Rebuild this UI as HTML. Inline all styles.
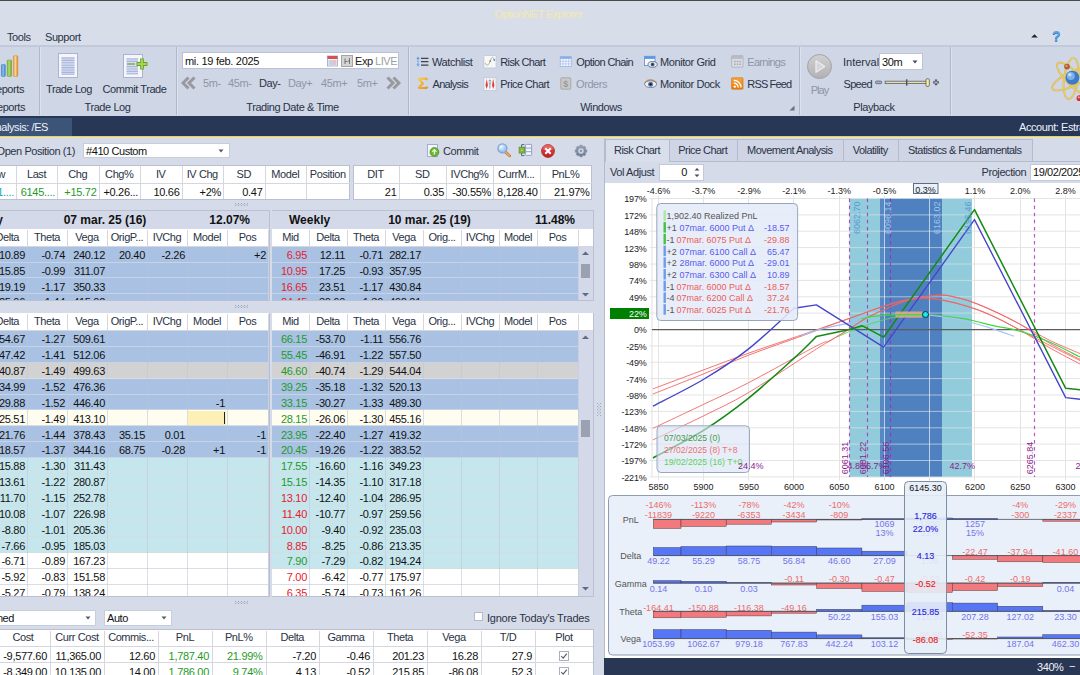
<!DOCTYPE html>
<html lang="en"><head><meta charset="utf-8"><title>OptionNET Explorer</title>
<style>
*{box-sizing:border-box;margin:0;padding:0}
html,body{width:1080px;height:675px;overflow:hidden;background:#d6dbe9}
body{position:relative;font-family:"Liberation Sans",sans-serif;font-size:11px;color:#2a3345;line-height:16px}
div,svg{position:absolute}
.t{white-space:nowrap;height:16px;line-height:16px;letter-spacing:-.42px}
.n{letter-spacing:-.3px}
.c{text-align:center}
.r{text-align:right}
.g{color:#8d96a6}
.b{font-weight:bold}
.grn{color:#1f9a2a}
.red{color:#e8202c}
</style></head>
<body>
<!-- ===== title bar / menu / ribbon ===== -->
<div style="left:0px;top:0px;width:1080px;height:46px;background:#d8ddea"></div><div style="left:0px;top:0px;width:1080px;height:1px;background:#4a4a4a"></div><div class="t c" style="left:438.5px;top:5.7px;width:200px;color:#f3e9b0;letter-spacing:-.58px">OptionNET Explorer</div><div class="t" style="left:7px;top:29px;">Tools</div><div class="t" style="left:45px;top:29px;">Support</div><svg style="left:1029px;top:31px" width="12" height="10" viewBox="0 0 12 10"><path d="M2.200 6.600 L5.500 3.200 L8.800 6.600 Z" fill="#1e2433"/></svg><div class="t" style="left:1052px;top:28px;font-size:14px;font-weight:bold;color:#5ba2e4;text-shadow:0 .5px 0 #3a7cc4">?</div><div style="left:0px;top:46px;width:1080px;height:70px;background:#cfd6e6"></div><div style="left:0px;top:45px;width:1080px;height:2px;background:#c2c9da"></div><div style="left:38.6px;top:47px;width:1px;height:68px;background:#b0b8ca"></div><div style="left:39.6px;top:47px;width:1px;height:68px;background:#dce1ed"></div><div style="left:175.5px;top:47px;width:1px;height:68px;background:#b0b8ca"></div><div style="left:176.5px;top:47px;width:1px;height:68px;background:#dce1ed"></div><div style="left:408.2px;top:47px;width:1px;height:68px;background:#b0b8ca"></div><div style="left:409.2px;top:47px;width:1px;height:68px;background:#dce1ed"></div><div style="left:799px;top:47px;width:1px;height:68px;background:#b0b8ca"></div><div style="left:800px;top:47px;width:1px;height:68px;background:#dce1ed"></div><div style="left:950.2px;top:47px;width:1px;height:68px;background:#b0b8ca"></div><div style="left:951.2px;top:47px;width:1px;height:68px;background:#dce1ed"></div><svg style="left:0;top:52px" width="24" height="28" viewBox="0 0 24 28"><defs><linearGradient id="b1" x1="0" y1="0" x2="1" y2="0"><stop offset="0" stop-color="#4a8cd4"/><stop offset=".45" stop-color="#8cc0f0"/><stop offset="1" stop-color="#3f7ec8"/></linearGradient><linearGradient id="b2" x1="0" y1="0" x2="1" y2="0"><stop offset="0" stop-color="#78b038"/><stop offset=".45" stop-color="#b4dc78"/><stop offset="1" stop-color="#6a9e30"/></linearGradient><linearGradient id="b3" x1="0" y1="0" x2="1" y2="0"><stop offset="0" stop-color="#ec9838"/><stop offset=".45" stop-color="#fcd498"/><stop offset="1" stop-color="#dc8428"/></linearGradient></defs><rect x="1.400" y="12.500" width="3.900" height="12" rx=".8" fill="url(#b1)" stroke="#3a78c0" stroke-width=".5"/><rect x="7.200" y="8" width="4.300" height="16.500" rx=".8" fill="url(#b2)" stroke="#6a9e30" stroke-width=".5"/><rect x="13.400" y="3.700" width="4.400" height="20.800" rx=".8" fill="url(#b3)" stroke="#d08a30" stroke-width=".5"/></svg><div class="t r" style="left:-176px;top:81px;width:200px;">Reports</div><div class="t r" style="left:-175px;top:99px;width:200px;">Reports</div><svg style="left:57px;top:52px" width="24" height="28" viewBox="0 0 24 28"><rect x="1.5" y="1.5" width="19" height="24" fill="#f4f6fb" stroke="#aab4cc"/><rect x="4.500" y="5" width="13" height="17.500" fill="#d4daf0"/><g stroke="#aab6dc" stroke-width="1.100"><path d="M4.500 6h13M4.500 8.400h13M4.500 10.800h13M4.500 13.200h13M4.500 15.600h13M4.500 18h13M4.500 20.400h13M4.500 22.300h13"/></g></svg><div class="t c" style="left:-31px;top:81px;width:200px;">Trade Log</div><svg style="left:122px;top:52px" width="28" height="28" viewBox="0 0 28 28"><rect x="1.5" y="2.5" width="19" height="23" fill="#f4f6fb" stroke="#aab4cc"/><rect x="4.500" y="6" width="11.500" height="16.500" fill="#d8def2"/><g stroke="#aab6dc" stroke-width="1.100"><path d="M4.500 7h11.500M4.500 9.400h11.500M4.500 14.600h11.500M4.500 17h11.500M4.500 19.400h11.500M4.500 21.800h11.500"/></g><path d="M5 12h8" stroke="#7fb15a" stroke-width="1.600"/><path d="M20 6.500v11M14.500 12h11" stroke="#6aa32a" stroke-width="3.800" stroke-linecap="butt"/><path d="M20 7.300v9.400M15.300 12h9.400" stroke="#a4d450" stroke-width="2.200" stroke-linecap="butt"/></svg><div class="t c" style="left:34.5px;top:81px;width:200px;">Commit Trade</div><div class="t c" style="left:7.5px;top:99px;width:200px;">Trade Log</div><div style="left:182px;top:52.4px;width:216.5px;height:17px;background:#fff;border:1px solid #b9c2d4"></div><div class="t n" style="left:185px;top:53px;color:#111">mi. 19 feb. 2025</div><svg style="left:326.500px;top:55px" width="27" height="12" viewBox="0 0 27 12"><rect x=".5" y="1" width="10" height="10" fill="#f4f6fc" stroke="#9aa6c8" stroke-width=".8"/><rect x=".5" y="1" width="10" height="3" fill="#d85050"/><rect x="1.500" y="5" width="4.500" height="5" fill="#c4d0ec"/><rect x="6" y="5" width="3.500" height="5" fill="#ecc0c0"/><rect x="14.500" y=".5" width="11" height="11" fill="#d4d4d4" stroke="#a4a4a4"/><path d="M18 3.500v5.500M22.500 3v6M18 6.500h2.500M21 6h1.500" stroke="#6a6a6a" stroke-width=".9"/></svg><div class="t" style="left:355px;top:53px;color:#222">Exp</div><div class="t" style="left:375px;top:53px;color:#9aa0aa">LIVE</div><svg style="left:181px;top:76px" width="16" height="14" viewBox="0 0 16 14"><path d="M7.5 1.5 L2 7 L7.5 12.5 M13.5 1.5 L8 7 L13.5 12.5" fill="none" stroke="#97999e" stroke-width="3"/></svg><div class="t g" style="left:203px;top:75px;">5m-</div><div class="t g" style="left:228px;top:75px;">45m-</div><div class="t" style="left:259px;top:75px;">Day-</div><div class="t g" style="left:288px;top:75px;">Day+</div><div class="t g" style="left:321px;top:75px;">45m+</div><div class="t g" style="left:357px;top:75px;">5m+</div><svg style="left:385px;top:76px" width="16" height="14" viewBox="0 0 16 14"><path d="M2.5 1.5 L8 7 L2.5 12.5 M8.5 1.5 L14 7 L8.5 12.5" fill="none" stroke="#97999e" stroke-width="3"/></svg><div class="t c" style="left:192.5px;top:99px;width:200px;">Trading Date &amp; Time</div><svg style="left:415px;top:55px" width="15" height="14" viewBox="0 0 15 14"><path d="M6 3.400h7.400M6 6.700h7.400M6 10.100h7.400" stroke="#3f434c" stroke-width="1.300"/><path d="M1.300 4 L3 1.600 L4.700 4ZM1.300 9.200 L3 11.600 L4.700 9.200Z" fill="#5a9ee8"/><path d="M3 4.200v4.800" stroke="#6aa8ec" stroke-width="1.600" stroke-dasharray="1.200 .8"/></svg><div class="t" style="left:432px;top:54px;">Watchlist</div><svg style="left:415px;top:76px" width="15" height="15" viewBox="0 0 15 15"><defs><linearGradient id="sg" x1="0" y1="0" x2="1" y2="1"><stop offset="0" stop-color="#f8cc58"/><stop offset="1" stop-color="#e8941a"/></linearGradient></defs><path d="M11.700 4.300V2.700H3.400L7.900 7.400L3.400 12H11.700V10.400" fill="none" stroke="url(#sg)" stroke-width="2.200" stroke-linejoin="bevel"/></svg><div class="t" style="left:432.5px;top:76px;letter-spacing:-.68px">Analysis</div><svg style="left:483px;top:55px" width="14" height="14" viewBox="0 0 14 14"><rect x=".9" y=".4" width="12.200" height="12.600" fill="#f5f7fb" stroke="#c2c9da" stroke-width=".9"/><path d="M2 8 Q3.200 10.600 4.800 10 C6 9.400 6.600 7.500 7.200 6.100 C8 4.200 8.600 2.400 9.600 2.400 C10.400 2.400 10.800 3.800 11.300 5" fill="none" stroke="#9cc07c" stroke-width="1"/><circle cx="7.200" cy="6.100" r=".9" fill="#e25a34"/><circle cx="11.300" cy="5" r=".9" fill="#5a8ad8"/></svg><div class="t" style="left:500.3px;top:54px;letter-spacing:-.64px">Risk Chart</div><svg style="left:483px;top:77px" width="14" height="14" viewBox="0 0 14 14"><rect x=".9" y=".8" width="12.200" height="12.600" fill="#f5f7fb" stroke="#c2c9da" stroke-width=".9"/><path d="M3.700 1.900 L4.300 5 L4.900 8.300 L3.700 11.900 L2.500 8.300 L3.100 5Z M10.200 1.900 L10.800 5 L11.400 8.300 L10.200 11.900 L9 8.300 L9.600 5Z" fill="#e23a36"/><path d="M3.700 1.900 L4.300 5 L3.100 5Z M10.200 1.900 L10.800 5 L9.600 5Z" fill="#f08a80"/><path d="M6.900 2.600v9" stroke="#8a8e98" stroke-width="1"/><rect x="6.100" y="3.300" width="1.700" height="3.200" fill="#fff" stroke="#8a8e98" stroke-width=".6"/></svg><div class="t" style="left:500.3px;top:76px;letter-spacing:-.57px">Price Chart</div><svg style="left:559px;top:55px" width="14" height="13" viewBox="0 0 14 13"><rect x="1.300" y="1.500" width="11" height="10" fill="#fdfdff" stroke="#a4b8e4" stroke-width=".9"/><rect x="1.300" y="1.500" width="11" height="2.400" fill="#86b0ec"/><path d="M1.300 6.300h11M1.300 8.900h11M4.100 3.900v7.600M6.900 3.900v7.600M9.700 3.900v7.600" stroke="#b4c6ec" stroke-width=".9"/></svg><div class="t" style="left:576.3px;top:54px;letter-spacing:-.62px">Option Chain</div><svg style="left:560px;top:77px" width="12" height="13" viewBox="0 0 12 13"><rect x=".8" y=".8" width="10" height="11.400" rx="1" fill="#c8c8c8" stroke="#a6a6a6" stroke-width=".9"/></svg><div class="t" style="left:563.3px;top:75.7px;font-size:9px;font-weight:bold;color:#9a9a9a;letter-spacing:0">$</div><div class="t g" style="left:576px;top:76px;">Orders</div><svg style="left:643px;top:55px" width="16" height="14" viewBox="0 0 16 14"><rect x="1.500" y="1.300" width="10.500" height="9.300" fill="#f6f9fe" stroke="#6a94d8" stroke-width=".9"/><rect x="1.500" y="1.300" width="10.500" height="2.600" fill="#5a98e8"/><ellipse cx="9.600" cy="9.400" rx="4.600" ry="2.900" fill="#e4e8f2" stroke="#5a6274" stroke-width=".8"/><circle cx="9.600" cy="9.400" r="1.900" fill="#4a6aa0"/><circle cx="9.600" cy="9.400" r=".9" fill="#1c2230"/></svg><div class="t" style="left:660px;top:54px;">Monitor Grid</div><svg style="left:643px;top:78px" width="16" height="12" viewBox="0 0 16 12"><path d="M1.600 4.600 Q7.500 -1 13.600 4.600" fill="none" stroke="#c89a6a" stroke-width="1.300"/><ellipse cx="7.600" cy="6.200" rx="6" ry="3.400" fill="#eef0f6" stroke="#6a7080" stroke-width=".8"/><circle cx="7.600" cy="6.200" r="2.500" fill="#5a7cb4"/><circle cx="7.600" cy="6.200" r="1.200" fill="#1c2230"/></svg><div class="t" style="left:660px;top:76px;">Monitor Dock</div><svg style="left:731px;top:55px" width="14" height="14" viewBox="0 0 14 14"><rect x=".6" y=".6" width="11.400" height="11.600" rx=".8" fill="#dadce2" stroke="#aaaeb8" stroke-width=".8"/><rect x="1" y="1" width="10.600" height="2.800" fill="#b6bac4"/><path d="M3 6.500h7M3 9.300h7" stroke="#a8acb8" stroke-width="1.500" stroke-dasharray="1.700 1"/></svg><div class="t g" style="left:747.3px;top:54px;letter-spacing:-.72px">Earnings</div><svg style="left:731px;top:77px" width="14" height="14" viewBox="0 0 14 14"><defs><linearGradient id="rg" x1="0" y1="0" x2="0" y2="1"><stop offset="0" stop-color="#f9a636"/><stop offset="1" stop-color="#e8780e"/></linearGradient></defs><rect x=".6" y=".8" width="11.400" height="11.400" rx=".8" fill="url(#rg)" stroke="#d87810" stroke-width=".7"/><circle cx="3.8" cy="9.6" r="1.2" fill="#fff"/><path d="M2.8 6.2a4.2 4.2 0 0 1 4.4 4.4M2.8 3.4a7 7 0 0 1 7.2 7.2" fill="none" stroke="#fff" stroke-width="1.3"/></svg><div class="t" style="left:747.3px;top:76px;letter-spacing:-.85px">RSS Feed</div><div class="t c" style="left:501px;top:99px;width:200px;">Windows</div><svg style="left:788px;top:104px" width="8" height="8" viewBox="0 0 8 8"><path d="M6.5 1.5v5h-5z" fill="#6a7080"/></svg><svg style="left:805.800px;top:53px" width="27" height="27" viewBox="0 0 27 27"><defs><linearGradient id="pg" x1="0" y1="0" x2="0" y2="1"><stop offset="0" stop-color="#d0d0d2"/><stop offset="1" stop-color="#b2b2b4"/></linearGradient></defs><circle cx="13.5" cy="13.5" r="12" fill="url(#pg)" stroke="#a4a4a8" stroke-width="1"/><path d="M10 7.800 L18.800 13.500 L10 19.200Z" fill="#d6d6d8" stroke="#ececee" stroke-width="1.300" stroke-linejoin="round"/></svg><div class="t g c" style="left:719.5px;top:81.7px;width:200px;letter-spacing:-.95px">Play</div><div class="t" style="left:843px;top:54px;letter-spacing:0">Interval</div><div style="left:879px;top:53.3px;width:44px;height:16.4px;background:#fff;border:1px solid #bcc4d6"></div><div class="t" style="left:882px;top:54px;color:#111">30m</div><svg style="left:911px;top:59px" width="8" height="6" viewBox="0 0 8 6"><path d="M1.5 1.5h5L4 4.5z" fill="#444a58"/></svg><div class="t" style="left:843.5px;top:76px;letter-spacing:-.7px">Speed</div><svg style="left:874px;top:77px" width="68" height="12" viewBox="0 0 68 12"><rect x="1.500" y="4.100" width="6.200" height="2.600" rx="1" fill="#aab0c0" stroke="#5a6072" stroke-width=".8"/><rect x="11.200" y="4.200" width="42.500" height="2.400" fill="#e6e0a4" stroke="#5a6072" stroke-width=".8"/><path d="M32.700 2.300v6.400" stroke="#4c5468" stroke-width="1.500"/><rect x="52" y="1.800" width="3.300" height="7.600" rx="1" fill="#f6f0aa" stroke="#5a5c50" stroke-width=".8"/><path d="M59.200 5.400h5.600M62 2.600v5.600" stroke="#454c5e" stroke-width="2.200"/><path d="M60.200 5.400h3.600M62 3.600v3.600" stroke="#c4cad8" stroke-width=".8"/></svg><div class="t c" style="left:774px;top:99px;width:200px;">Playback</div><svg style="left:1044px;top:50px" width="36" height="56" viewBox="1044 50 36 56"><g fill="none" stroke="#c99a1c" stroke-width="1.900" stroke-opacity=".55"><ellipse cx="1073" cy="78.500" rx="21.500" ry="7" transform="rotate(45 1073 78.500)"/><ellipse cx="1073" cy="78.500" rx="23" ry="7" transform="rotate(-26 1073 78.500)"/><ellipse cx="1071" cy="78.600" rx="7" ry="20.600" transform="rotate(7.500 1071 78.600)"/></g><g fill="none" stroke="#f0cf58" stroke-width="1.100"><ellipse cx="1073" cy="78.500" rx="21.500" ry="7" transform="rotate(45 1073 78.500)"/><ellipse cx="1073" cy="78.500" rx="23" ry="7" transform="rotate(-26 1073 78.500)"/><ellipse cx="1071" cy="78.600" rx="7" ry="20.600" transform="rotate(7.500 1071 78.600)"/></g><circle cx="1072.400" cy="77.800" r="7" fill="#3f7cc8"/><circle cx="1070.800" cy="76" r="4" fill="#7fb0ea"/><circle cx="1069.800" cy="74.800" r="1.800" fill="#c4dcf8"/><circle cx="1067" cy="66.600" r="2.900" fill="#b0602a"/><circle cx="1066.400" cy="65.900" r="1.200" fill="#dc9a6a"/><circle cx="1079.500" cy="98.200" r="2.900" fill="#d82a2a"/><circle cx="1078.800" cy="97.400" r="1.100" fill="#f4a0a0"/></svg><div style="left:0px;top:115.5px;width:1080px;height:21.5px;background:#293756"></div><div style="left:0px;top:118px;width:72px;height:19px;background:#3b5478"></div><div class="t r" style="left:-152px;top:119px;width:200px;color:#eef2fa">Analysis: /ES</div><div class="t" style="left:1019px;top:119px;color:#eef2fa">Account: Estrategia</div><div style="left:0px;top:136px;width:1080px;height:1px;background:#dccf74"></div><div style="left:0px;top:137px;width:1080px;height:1px;background:#e8e2b4"></div>
<!-- ===== left panel ===== -->
<div style="left:0px;top:138px;width:604px;height:537px;background:#d6dbe9"></div><div class="t r" style="left:-125px;top:142.5px;width:200px;">Open Position (1)</div><div style="left:83px;top:142.7px;width:147px;height:15.6px;background:#fff;border:1px solid #c6cddc"></div><div class="t" style="left:86px;top:142.5px;color:#111">#410 Custom</div><svg style="left:217px;top:148px" width="8" height="6" viewBox="0 0 8 6"><path d="M1.5 1.5h5L4 4.5z" fill="#555b68"/></svg><svg style="left:426px;top:143px" width="16" height="16" viewBox="0 0 16 16"><rect x="1.5" y="1.5" width="10" height="12" fill="#f4f6fb" stroke="#a4aec4"/><circle cx="8.400" cy="9" r="4.400" fill="#6ab834" stroke="#4a8c20" stroke-width=".8"/><path d="M8.400 11.600V7M6.300 8.800L8.400 6.600L10.500 8.800" fill="none" stroke="#e8f6d8" stroke-width="1.300"/></svg><div class="t" style="left:443px;top:142.5px;">Commit</div><svg style="left:495px;top:142px" width="18" height="18" viewBox="0 0 18 18"><defs><radialGradient id="mg" cx=".35" cy=".3" r=".8"><stop offset="0" stop-color="#f4faff"/><stop offset=".55" stop-color="#a8d0f8"/><stop offset="1" stop-color="#7fb4ec"/></radialGradient></defs><path d="M10.800 10.400L14.600 13.800" stroke="#b87a34" stroke-width="2.800" stroke-linecap="round"/><path d="M10.800 10.300L14.500 13.600" stroke="#eaa860" stroke-width="1.600" stroke-linecap="round"/><circle cx="7.400" cy="6.400" r="4.500" fill="url(#mg)" stroke="#86a2d2" stroke-width="1.300"/></svg><svg style="left:517px;top:142px" width="16" height="16" viewBox="0 0 16 16"><path d="M7.400 2.600H4.600V13.600H7.400" fill="none" stroke="#5a6484" stroke-width="1"/><rect x="8.600" y="2.400" width="6" height="11" rx=".6" fill="#f2f5fc" stroke="#8a9ac8" stroke-width=".9"/><path d="M8.600 6.100h6M8.600 9.700h6" stroke="#8a9ac8" stroke-width=".9"/><rect x="2.200" y="5.200" width="5.400" height="5.800" fill="#8cc63f" stroke="#5c9222" stroke-width=".9"/><rect x="3.900" y="7" width="2" height="2.200" fill="#c4e690" stroke="#5c9222" stroke-width=".5"/></svg><svg style="left:540px;top:142.500px" width="16" height="16" viewBox="0 0 16 16"><defs><linearGradient id="xg" x1="0" y1="0" x2="0" y2="1"><stop offset="0" stop-color="#ea5454"/><stop offset="1" stop-color="#b81c1c"/></linearGradient></defs><circle cx="8" cy="8" r="6.500" fill="url(#xg)" stroke="#b42424" stroke-width=".7"/><ellipse cx="8" cy="5" rx="4.800" ry="2.800" fill="#f08080" fill-opacity=".5"/><path d="M5.3 5.3l5.4 5.4M10.7 5.3l-5.4 5.400" stroke="#fff" stroke-width="2"/></svg><svg style="left:573px;top:142.800px" width="16" height="16" viewBox="0 0 16 16"><defs><linearGradient id="gg" x1="0" y1="0" x2="0" y2="1"><stop offset="0" stop-color="#95a0b8"/><stop offset="1" stop-color="#6a7792"/></linearGradient></defs><path d="M12.26 6.54 L13.77 6.77 L13.77 9.23 L12.26 9.46 L12.04 9.98 L12.95 11.21 L11.21 12.95 L9.98 12.04 L9.46 12.26 L9.23 13.77 L6.77 13.77 L6.54 12.26 L6.02 12.04 L4.79 12.95 L3.05 11.21 L3.96 9.98 L3.74 9.46 L2.23 9.23 L2.23 6.77 L3.74 6.54 L3.96 6.02 L3.05 4.79 L4.79 3.05 L6.02 3.96 L6.54 3.74 L6.77 2.23 L9.23 2.23 L9.46 3.74 L9.98 3.96 L11.21 3.05 L12.95 4.79 L12.04 6.02Z" fill="url(#gg)" stroke="#7a869e" stroke-width=".5" stroke-linejoin="round"/><circle cx="8" cy="8" r="2.700" fill="#d2d8e6" stroke="#b4bcd0" stroke-width=".6"/><circle cx="8" cy="8" r="1.150" fill="#8792aa"/></svg><div style="left:-25px;top:165px;width:374.5px;height:35px;background:#fff;border:1px solid #b9c0d0;border-left:0"></div><div style="left:-25px;top:183px;width:374.5px;height:1px;background:#d6d6e0"></div><div style="left:16px;top:166px;width:1px;height:33px;background:#d6d6e0"></div><div style="left:57px;top:166px;width:1px;height:33px;background:#d6d6e0"></div><div style="left:98.5px;top:166px;width:1px;height:33px;background:#d6d6e0"></div><div style="left:140px;top:166px;width:1px;height:33px;background:#d6d6e0"></div><div style="left:181.5px;top:166px;width:1px;height:33px;background:#d6d6e0"></div><div style="left:223px;top:166px;width:1px;height:33px;background:#d6d6e0"></div><div style="left:264.5px;top:166px;width:1px;height:33px;background:#d6d6e0"></div><div style="left:306px;top:166px;width:1px;height:33px;background:#d6d6e0"></div><div class="t c" style="left:-104.5px;top:166.3px;width:200px;">Low</div><div class="t c" style="left:-63.5px;top:166.3px;width:200px;">Last</div><div class="t c" style="left:-22.25px;top:166.3px;width:200px;">Chg</div><div class="t c" style="left:19.25px;top:166.3px;width:200px;">Chg%</div><div class="t c" style="left:60.75px;top:166.3px;width:200px;">IV</div><div class="t c" style="left:102.25px;top:166.3px;width:200px;">IV Chg</div><div class="t c" style="left:143.75px;top:166.3px;width:200px;">SD</div><div class="t c" style="left:185.25px;top:166.3px;width:200px;">Model</div><div class="t c" style="left:227.75px;top:166.3px;width:200px;">Position</div><div class="t n r" style="left:-186px;top:183.8px;width:200px;color:#18a8a8">6121....</div><div class="t n r" style="left:-145px;top:183.8px;width:200px;color:#1f9a2a">6145....</div><div class="t n r" style="left:-103.5px;top:183.8px;width:200px;color:#1f9a2a">+15.72</div><div class="t n r" style="left:-62px;top:183.8px;width:200px;color:#111">+0.26...</div><div class="t n r" style="left:-20.5px;top:183.8px;width:200px;color:#111">10.66</div><div class="t n r" style="left:21px;top:183.8px;width:200px;color:#111">+2%</div><div class="t n r" style="left:62.5px;top:183.8px;width:200px;color:#111">0.47</div><div style="left:352.5px;top:165px;width:239px;height:35px;background:#fff;border:1px solid #b9c0d0"></div><div style="left:352.5px;top:183px;width:239px;height:1px;background:#d6d6e0"></div><div style="left:398.5px;top:166px;width:1px;height:33px;background:#d6d6e0"></div><div style="left:446px;top:166px;width:1px;height:33px;background:#d6d6e0"></div><div style="left:493px;top:166px;width:1px;height:33px;background:#d6d6e0"></div><div style="left:539.5px;top:166px;width:1px;height:33px;background:#d6d6e0"></div><div class="t c" style="left:275.5px;top:166.3px;width:200px;">DIT</div><div class="t c" style="left:322.25px;top:166.3px;width:200px;">SD</div><div class="t c" style="left:369.5px;top:166.3px;width:200px;">IVChg%</div><div class="t c" style="left:416.25px;top:166.3px;width:200px;">CurrM...</div><div class="t c" style="left:465.5px;top:166.3px;width:200px;">PnL%</div><div class="t n r" style="left:196.5px;top:183.8px;width:200px;color:#111">21</div><div class="t n r" style="left:244px;top:183.8px;width:200px;color:#111">0.35</div><div class="t n r" style="left:291px;top:183.8px;width:200px;color:#111">-30.55%</div><div class="t n r" style="left:337.5px;top:183.8px;width:200px;color:#111">8,128.40</div><div class="t n r" style="left:389.5px;top:183.8px;width:200px;color:#111">21.97%</div><svg style="left:234.5px;top:203.0px" width="13" height="3" viewBox="0 0 13 3" fill="#9ea7bc"><rect x="0" y="0" width="1" height="1"/><rect x="0" y="2" width="1" height="1"/><rect x="3" y="0" width="1" height="1"/><rect x="3" y="2" width="1" height="1"/><rect x="6" y="0" width="1" height="1"/><rect x="6" y="2" width="1" height="1"/><rect x="9" y="0" width="1" height="1"/><rect x="9" y="2" width="1" height="1"/><rect x="12" y="0" width="1" height="1"/><rect x="12" y="2" width="1" height="1"/><rect x="1.5" y="1" width="1" height="1"/><rect x="4.5" y="1" width="1" height="1"/><rect x="7.5" y="1" width="1" height="1"/><rect x="10.5" y="1" width="1" height="1"/></svg><svg style="left:234.5px;top:305.0px" width="13" height="3" viewBox="0 0 13 3" fill="#9ea7bc"><rect x="0" y="0" width="1" height="1"/><rect x="0" y="2" width="1" height="1"/><rect x="3" y="0" width="1" height="1"/><rect x="3" y="2" width="1" height="1"/><rect x="6" y="0" width="1" height="1"/><rect x="6" y="2" width="1" height="1"/><rect x="9" y="0" width="1" height="1"/><rect x="9" y="2" width="1" height="1"/><rect x="12" y="0" width="1" height="1"/><rect x="12" y="2" width="1" height="1"/><rect x="1.5" y="1" width="1" height="1"/><rect x="4.5" y="1" width="1" height="1"/><rect x="7.5" y="1" width="1" height="1"/><rect x="10.5" y="1" width="1" height="1"/></svg><svg style="left:234.5px;top:600.5px" width="13" height="3" viewBox="0 0 13 3" fill="#9ea7bc"><rect x="0" y="0" width="1" height="1"/><rect x="0" y="2" width="1" height="1"/><rect x="3" y="0" width="1" height="1"/><rect x="3" y="2" width="1" height="1"/><rect x="6" y="0" width="1" height="1"/><rect x="6" y="2" width="1" height="1"/><rect x="9" y="0" width="1" height="1"/><rect x="9" y="2" width="1" height="1"/><rect x="12" y="0" width="1" height="1"/><rect x="12" y="2" width="1" height="1"/><rect x="1.5" y="1" width="1" height="1"/><rect x="4.5" y="1" width="1" height="1"/><rect x="7.5" y="1" width="1" height="1"/><rect x="10.5" y="1" width="1" height="1"/></svg><div style="left:-13px;top:210px;width:283px;height:91px;background:#d6dbe9;border:1px solid #b9c0d0;border-left:0;overflow:hidden"></div><div style="left:-13px;top:211px;width:282px;height:17.6px;background:#d3d9e8"></div><div class="t r" style="left:-197px;top:212.3px;width:200px;font-weight:bold;font-size:12px;color:#111;letter-spacing:0">Monthly</div><div class="t c" style="left:5px;top:212.3px;width:200px;font-weight:bold;font-size:12px;color:#111;letter-spacing:0">07 mar. 25 (16)</div><div class="t r" style="left:50px;top:212.3px;width:200px;font-weight:bold;font-size:12px;color:#111;letter-spacing:0">12.07%</div><div style="left:-13px;top:228.6px;width:282px;height:18.1px;background:#ffffff;border-bottom:1px solid #d6d6e0"></div><div class="t r" style="left:-181px;top:228.5px;width:200px;">Delta</div><div class="t c" style="left:-53px;top:228.5px;width:200px;">Theta</div><div class="t c" style="left:-13px;top:228.5px;width:200px;">Vega</div><div class="t c" style="left:27px;top:228.5px;width:200px;">OrigP...</div><div class="t c" style="left:67px;top:228.5px;width:200px;">IVChg</div><div class="t c" style="left:107px;top:228.5px;width:200px;">Model</div><div class="t c" style="left:147.5px;top:228.5px;width:200px;">Pos</div><div style="left:27px;top:229.6px;width:1px;height:16.1px;background:#d6d6e0"></div><div style="left:67px;top:229.6px;width:1px;height:16.1px;background:#d6d6e0"></div><div style="left:107px;top:229.6px;width:1px;height:16.1px;background:#d6d6e0"></div><div style="left:147px;top:229.6px;width:1px;height:16.1px;background:#d6d6e0"></div><div style="left:187px;top:229.6px;width:1px;height:16.1px;background:#d6d6e0"></div><div style="left:227px;top:229.6px;width:1px;height:16.1px;background:#d6d6e0"></div><div style="left:268px;top:229.6px;width:1px;height:16.1px;background:#d6d6e0"></div><div style="left:0px;top:246.7px;width:269px;height:53.3px;overflow:hidden"><div style="left:0;top:0.0px;width:268px;height:15.97px;background:#a9c2e3"></div><div style="left:0;top:14.87px;width:268px;height:1px;background:#c9d3e6"></div><div class="t r n" style="left:-175px;top:0.20px;width:200px;color:#111">10.89</div><div class="t r n" style="left:-135px;top:0.20px;width:200px;color:#111">-0.74</div><div class="t r n" style="left:-95px;top:0.20px;width:200px;color:#111">240.12</div><div class="t r n" style="left:-55px;top:0.20px;width:200px;color:#111">20.40</div><div class="t r n" style="left:-15px;top:0.20px;width:200px;color:#111">-2.26</div><div class="t r n" style="left:66px;top:0.20px;width:200px;color:#111">+2</div><div style="left:0;top:15.87px;width:268px;height:15.97px;background:#a9c2e3"></div><div style="left:0;top:30.74px;width:268px;height:1px;background:#c9d3e6"></div><div class="t r n" style="left:-175px;top:16.07px;width:200px;color:#111">15.85</div><div class="t r n" style="left:-135px;top:16.07px;width:200px;color:#111">-0.99</div><div class="t r n" style="left:-95px;top:16.07px;width:200px;color:#111">311.07</div><div style="left:0;top:31.74px;width:268px;height:15.97px;background:#a9c2e3"></div><div style="left:0;top:46.61px;width:268px;height:1px;background:#c9d3e6"></div><div class="t r n" style="left:-175px;top:31.94px;width:200px;color:#111">19.19</div><div class="t r n" style="left:-135px;top:31.94px;width:200px;color:#111">-1.17</div><div class="t r n" style="left:-95px;top:31.94px;width:200px;color:#111">350.33</div><div style="left:0;top:47.61px;width:268px;height:15.97px;background:#a9c2e3"></div><div style="left:0;top:62.48px;width:268px;height:1px;background:#c9d3e6"></div><div class="t r n" style="left:-175px;top:47.81px;width:200px;color:#111">25.06</div><div class="t r n" style="left:-135px;top:47.81px;width:200px;color:#111">-1.44</div><div class="t r n" style="left:-95px;top:47.81px;width:200px;color:#111">415.02</div><div style="left:27px;top:0;width:1px;height:53.3px;background:rgba(190,196,214,.55)"></div><div style="left:67px;top:0;width:1px;height:53.3px;background:rgba(190,196,214,.55)"></div><div style="left:107px;top:0;width:1px;height:53.3px;background:rgba(190,196,214,.55)"></div><div style="left:147px;top:0;width:1px;height:53.3px;background:rgba(190,196,214,.55)"></div><div style="left:187px;top:0;width:1px;height:53.3px;background:rgba(190,196,214,.55)"></div><div style="left:227px;top:0;width:1px;height:53.3px;background:rgba(190,196,214,.55)"></div><div style="left:268px;top:0;width:1px;height:53.3px;background:rgba(190,196,214,.55)"></div></div><div style="left:272px;top:210px;width:322px;height:91px;background:#d6dbe9;border:1px solid #b9c0d0;overflow:hidden"></div><div style="left:272px;top:211px;width:321px;height:17.6px;background:#d3d9e8"></div><div class="t" style="left:289px;top:212.3px;font-weight:bold;font-size:12px;color:#111;letter-spacing:0">Weekly</div><div class="t c" style="left:329.5px;top:212.3px;width:200px;font-weight:bold;font-size:12px;color:#111;letter-spacing:0">10 mar. 25 (19)</div><div class="t r" style="left:375px;top:212.3px;width:200px;font-weight:bold;font-size:12px;color:#111;letter-spacing:0">11.48%</div><div style="left:272px;top:228.6px;width:321px;height:18.1px;background:#ffffff;border-bottom:1px solid #d6d6e0"></div><div class="t c" style="left:190.5px;top:228.5px;width:200px;">Mid</div><div class="t c" style="left:228px;top:228.5px;width:200px;">Delta</div><div class="t c" style="left:266px;top:228.5px;width:200px;">Theta</div><div class="t c" style="left:304px;top:228.5px;width:200px;">Vega</div><div class="t c" style="left:342px;top:228.5px;width:200px;">Orig...</div><div class="t c" style="left:380px;top:228.5px;width:200px;">IVChg</div><div class="t c" style="left:418px;top:228.5px;width:200px;">Model</div><div class="t c" style="left:457.5px;top:228.5px;width:200px;">Pos</div><div style="left:309px;top:229.6px;width:1px;height:16.1px;background:#d6d6e0"></div><div style="left:347px;top:229.6px;width:1px;height:16.1px;background:#d6d6e0"></div><div style="left:385px;top:229.6px;width:1px;height:16.1px;background:#d6d6e0"></div><div style="left:423px;top:229.6px;width:1px;height:16.1px;background:#d6d6e0"></div><div style="left:461px;top:229.6px;width:1px;height:16.1px;background:#d6d6e0"></div><div style="left:499px;top:229.6px;width:1px;height:16.1px;background:#d6d6e0"></div><div style="left:537px;top:229.6px;width:1px;height:16.1px;background:#d6d6e0"></div><div style="left:578px;top:229.6px;width:1px;height:16.1px;background:#d6d6e0"></div><div style="left:272px;top:246.7px;width:307px;height:53.3px;overflow:hidden"><div style="left:0;top:0.0px;width:306px;height:15.97px;background:#a9c2e3"></div><div style="left:0;top:14.87px;width:306px;height:1px;background:#c9d3e6"></div><div class="t r n" style="left:-165px;top:0.20px;width:200px;color:#e8202c">6.95</div><div class="t r n" style="left:-127px;top:0.20px;width:200px;color:#111">12.11</div><div class="t r n" style="left:-89px;top:0.20px;width:200px;color:#111">-0.71</div><div class="t r n" style="left:-51px;top:0.20px;width:200px;color:#111">282.17</div><div style="left:0;top:15.87px;width:306px;height:15.97px;background:#a9c2e3"></div><div style="left:0;top:30.74px;width:306px;height:1px;background:#c9d3e6"></div><div class="t r n" style="left:-165px;top:16.07px;width:200px;color:#e8202c">10.95</div><div class="t r n" style="left:-127px;top:16.07px;width:200px;color:#111">17.25</div><div class="t r n" style="left:-89px;top:16.07px;width:200px;color:#111">-0.93</div><div class="t r n" style="left:-51px;top:16.07px;width:200px;color:#111">357.95</div><div style="left:0;top:31.74px;width:306px;height:15.97px;background:#a9c2e3"></div><div style="left:0;top:46.61px;width:306px;height:1px;background:#c9d3e6"></div><div class="t r n" style="left:-165px;top:31.94px;width:200px;color:#e8202c">16.65</div><div class="t r n" style="left:-127px;top:31.94px;width:200px;color:#111">23.51</div><div class="t r n" style="left:-89px;top:31.94px;width:200px;color:#111">-1.17</div><div class="t r n" style="left:-51px;top:31.94px;width:200px;color:#111">430.84</div><div style="left:0;top:47.61px;width:306px;height:15.97px;background:#a9c2e3"></div><div style="left:0;top:62.48px;width:306px;height:1px;background:#c9d3e6"></div><div class="t r n" style="left:-165px;top:47.81px;width:200px;color:#e8202c">24.45</div><div class="t r n" style="left:-127px;top:47.81px;width:200px;color:#111">30.60</div><div class="t r n" style="left:-89px;top:47.81px;width:200px;color:#111">-1.39</div><div class="t r n" style="left:-51px;top:47.81px;width:200px;color:#111">492.21</div><div style="left:37px;top:0;width:1px;height:53.3px;background:rgba(190,196,214,.55)"></div><div style="left:75px;top:0;width:1px;height:53.3px;background:rgba(190,196,214,.55)"></div><div style="left:113px;top:0;width:1px;height:53.3px;background:rgba(190,196,214,.55)"></div><div style="left:151px;top:0;width:1px;height:53.3px;background:rgba(190,196,214,.55)"></div><div style="left:189px;top:0;width:1px;height:53.3px;background:rgba(190,196,214,.55)"></div><div style="left:227px;top:0;width:1px;height:53.3px;background:rgba(190,196,214,.55)"></div><div style="left:265px;top:0;width:1px;height:53.3px;background:rgba(190,196,214,.55)"></div><div style="left:306px;top:0;width:1px;height:53.3px;background:rgba(190,196,214,.55)"></div></div><div style="left:579px;top:246.7px;width:14px;height:53.3px;background:#d3d9e8"></div><svg style="left:581.2px;top:249.8px" width="9" height="6" viewBox="0 0 9 6"><path d="M1 5L4.500 1.500L8 5z" fill="#5f6c86"/></svg><svg style="left:581.2px;top:291.9px" width="9" height="6" viewBox="0 0 9 6"><path d="M1 1L4.500 4.500L8 1z" fill="#5f6c86"/></svg><div style="left:581.4px;top:264px;width:9px;height:14px;background:#9aa2b2"></div><div style="left:-13px;top:313px;width:283px;height:284px;background:#d6dbe9;border:1px solid #b9c0d0;border-left:0;overflow:hidden"></div><div style="left:-13px;top:313px;width:282px;height:18.1px;background:#ffffff;border-bottom:1px solid #d6d6e0"></div><div class="t r" style="left:-181px;top:312.9px;width:200px;">Delta</div><div class="t c" style="left:-53px;top:312.9px;width:200px;">Theta</div><div class="t c" style="left:-13px;top:312.9px;width:200px;">Vega</div><div class="t c" style="left:27px;top:312.9px;width:200px;">OrigP...</div><div class="t c" style="left:67px;top:312.9px;width:200px;">IVChg</div><div class="t c" style="left:107px;top:312.9px;width:200px;">Model</div><div class="t c" style="left:147.5px;top:312.9px;width:200px;">Pos</div><div style="left:27px;top:314px;width:1px;height:16.1px;background:#d6d6e0"></div><div style="left:67px;top:314px;width:1px;height:16.1px;background:#d6d6e0"></div><div style="left:107px;top:314px;width:1px;height:16.1px;background:#d6d6e0"></div><div style="left:147px;top:314px;width:1px;height:16.1px;background:#d6d6e0"></div><div style="left:187px;top:314px;width:1px;height:16.1px;background:#d6d6e0"></div><div style="left:227px;top:314px;width:1px;height:16.1px;background:#d6d6e0"></div><div style="left:268px;top:314px;width:1px;height:16.1px;background:#d6d6e0"></div><div style="left:0px;top:331.1px;width:269px;height:264.9px;overflow:hidden"><div style="left:0;top:0.0px;width:268px;height:15.97px;background:#a9c2e3"></div><div style="left:0;top:14.87px;width:268px;height:1px;background:#c9d3e6"></div><div class="t r n" style="left:-175px;top:0.20px;width:200px;color:#111">-54.67</div><div class="t r n" style="left:-135px;top:0.20px;width:200px;color:#111">-1.27</div><div class="t r n" style="left:-95px;top:0.20px;width:200px;color:#111">509.61</div><div style="left:0;top:15.87px;width:268px;height:15.97px;background:#a9c2e3"></div><div style="left:0;top:30.74px;width:268px;height:1px;background:#c9d3e6"></div><div class="t r n" style="left:-175px;top:16.07px;width:200px;color:#111">-47.42</div><div class="t r n" style="left:-135px;top:16.07px;width:200px;color:#111">-1.41</div><div class="t r n" style="left:-95px;top:16.07px;width:200px;color:#111">512.06</div><div style="left:0;top:31.74px;width:268px;height:15.97px;background:#d2d2d2"></div><div style="left:0;top:46.61px;width:268px;height:1px;background:#dcdce4"></div><div class="t r n" style="left:-175px;top:31.94px;width:200px;color:#111">-40.87</div><div class="t r n" style="left:-135px;top:31.94px;width:200px;color:#111">-1.49</div><div class="t r n" style="left:-95px;top:31.94px;width:200px;color:#111">499.63</div><div style="left:0;top:47.61px;width:268px;height:15.97px;background:#a9c2e3"></div><div style="left:0;top:62.48px;width:268px;height:1px;background:#c9d3e6"></div><div class="t r n" style="left:-175px;top:47.81px;width:200px;color:#111">-34.99</div><div class="t r n" style="left:-135px;top:47.81px;width:200px;color:#111">-1.52</div><div class="t r n" style="left:-95px;top:47.81px;width:200px;color:#111">476.36</div><div style="left:0;top:63.48px;width:268px;height:15.97px;background:#a9c2e3"></div><div style="left:0;top:78.35px;width:268px;height:1px;background:#c9d3e6"></div><div class="t r n" style="left:-175px;top:63.68px;width:200px;color:#111">-29.88</div><div class="t r n" style="left:-135px;top:63.68px;width:200px;color:#111">-1.52</div><div class="t r n" style="left:-95px;top:63.68px;width:200px;color:#111">446.40</div><div class="t r n" style="left:25px;top:63.68px;width:200px;color:#111">-1</div><div style="left:0;top:79.35px;width:268px;height:15.97px;background:#fffdf0"></div><div style="left:0;top:94.22px;width:268px;height:1px;background:#dcdce4"></div><div class="t r n" style="left:-175px;top:79.55px;width:200px;color:#111">-25.51</div><div class="t r n" style="left:-135px;top:79.55px;width:200px;color:#111">-1.49</div><div class="t r n" style="left:-95px;top:79.55px;width:200px;color:#111">413.10</div><div style="left:188px;top:79.95px;width:38px;height:14px;background:#fdf0b6"></div><div style="left:224px;top:80.95px;width:1px;height:12px;background:#222"></div><div style="left:0;top:95.22px;width:268px;height:15.97px;background:#a9c2e3"></div><div style="left:0;top:110.09px;width:268px;height:1px;background:#c9d3e6"></div><div class="t r n" style="left:-175px;top:95.42px;width:200px;color:#111">-21.76</div><div class="t r n" style="left:-135px;top:95.42px;width:200px;color:#111">-1.44</div><div class="t r n" style="left:-95px;top:95.42px;width:200px;color:#111">378.43</div><div class="t r n" style="left:-55px;top:95.42px;width:200px;color:#111">35.15</div><div class="t r n" style="left:-15px;top:95.42px;width:200px;color:#111">0.01</div><div class="t r n" style="left:66px;top:95.42px;width:200px;color:#111">-1</div><div style="left:0;top:111.09px;width:268px;height:15.97px;background:#a9c2e3"></div><div style="left:0;top:125.96px;width:268px;height:1px;background:#c9d3e6"></div><div class="t r n" style="left:-175px;top:111.29px;width:200px;color:#111">-18.57</div><div class="t r n" style="left:-135px;top:111.29px;width:200px;color:#111">-1.37</div><div class="t r n" style="left:-95px;top:111.29px;width:200px;color:#111">344.16</div><div class="t r n" style="left:-55px;top:111.29px;width:200px;color:#111">68.75</div><div class="t r n" style="left:-15px;top:111.29px;width:200px;color:#111">-0.28</div><div class="t r n" style="left:25px;top:111.29px;width:200px;color:#111">+1</div><div class="t r n" style="left:66px;top:111.29px;width:200px;color:#111">-1</div><div style="left:0;top:126.96px;width:268px;height:15.97px;background:#c5e6ec"></div><div style="left:0;top:141.83px;width:268px;height:1px;background:#d4dde0"></div><div class="t r n" style="left:-175px;top:127.16px;width:200px;color:#111">-15.88</div><div class="t r n" style="left:-135px;top:127.16px;width:200px;color:#111">-1.30</div><div class="t r n" style="left:-95px;top:127.16px;width:200px;color:#111">311.43</div><div style="left:0;top:142.83px;width:268px;height:15.97px;background:#c5e6ec"></div><div style="left:0;top:157.70px;width:268px;height:1px;background:#d4dde0"></div><div class="t r n" style="left:-175px;top:143.03px;width:200px;color:#111">-13.61</div><div class="t r n" style="left:-135px;top:143.03px;width:200px;color:#111">-1.22</div><div class="t r n" style="left:-95px;top:143.03px;width:200px;color:#111">280.87</div><div style="left:0;top:158.7px;width:268px;height:15.97px;background:#c5e6ec"></div><div style="left:0;top:173.57px;width:268px;height:1px;background:#d4dde0"></div><div class="t r n" style="left:-175px;top:158.90px;width:200px;color:#111">-11.70</div><div class="t r n" style="left:-135px;top:158.90px;width:200px;color:#111">-1.15</div><div class="t r n" style="left:-95px;top:158.90px;width:200px;color:#111">252.78</div><div style="left:0;top:174.57px;width:268px;height:15.97px;background:#c5e6ec"></div><div style="left:0;top:189.44px;width:268px;height:1px;background:#d4dde0"></div><div class="t r n" style="left:-175px;top:174.77px;width:200px;color:#111">-10.08</div><div class="t r n" style="left:-135px;top:174.77px;width:200px;color:#111">-1.07</div><div class="t r n" style="left:-95px;top:174.77px;width:200px;color:#111">226.98</div><div style="left:0;top:190.44px;width:268px;height:15.97px;background:#c5e6ec"></div><div style="left:0;top:205.31px;width:268px;height:1px;background:#d4dde0"></div><div class="t r n" style="left:-175px;top:190.64px;width:200px;color:#111">-8.80</div><div class="t r n" style="left:-135px;top:190.64px;width:200px;color:#111">-1.01</div><div class="t r n" style="left:-95px;top:190.64px;width:200px;color:#111">205.36</div><div style="left:0;top:206.31px;width:268px;height:15.97px;background:#c5e6ec"></div><div style="left:0;top:221.18px;width:268px;height:1px;background:#d4dde0"></div><div class="t r n" style="left:-175px;top:206.51px;width:200px;color:#111">-7.66</div><div class="t r n" style="left:-135px;top:206.51px;width:200px;color:#111">-0.95</div><div class="t r n" style="left:-95px;top:206.51px;width:200px;color:#111">185.03</div><div style="left:0;top:222.18px;width:268px;height:15.97px;background:#ffffff"></div><div style="left:0;top:237.05px;width:268px;height:1px;background:#dcdce4"></div><div class="t r n" style="left:-175px;top:222.38px;width:200px;color:#111">-6.71</div><div class="t r n" style="left:-135px;top:222.38px;width:200px;color:#111">-0.89</div><div class="t r n" style="left:-95px;top:222.38px;width:200px;color:#111">167.23</div><div style="left:0;top:238.05px;width:268px;height:15.97px;background:#ffffff"></div><div style="left:0;top:252.92px;width:268px;height:1px;background:#dcdce4"></div><div class="t r n" style="left:-175px;top:238.25px;width:200px;color:#111">-5.92</div><div class="t r n" style="left:-135px;top:238.25px;width:200px;color:#111">-0.83</div><div class="t r n" style="left:-95px;top:238.25px;width:200px;color:#111">151.58</div><div style="left:0;top:253.92px;width:268px;height:15.97px;background:#ffffff"></div><div style="left:0;top:268.79px;width:268px;height:1px;background:#dcdce4"></div><div class="t r n" style="left:-175px;top:254.12px;width:200px;color:#111">-5.27</div><div class="t r n" style="left:-135px;top:254.12px;width:200px;color:#111">-0.79</div><div class="t r n" style="left:-95px;top:254.12px;width:200px;color:#111">138.24</div><div style="left:27px;top:0;width:1px;height:264.9px;background:rgba(190,196,214,.55)"></div><div style="left:67px;top:0;width:1px;height:264.9px;background:rgba(190,196,214,.55)"></div><div style="left:107px;top:0;width:1px;height:264.9px;background:rgba(190,196,214,.55)"></div><div style="left:147px;top:0;width:1px;height:264.9px;background:rgba(190,196,214,.55)"></div><div style="left:187px;top:0;width:1px;height:264.9px;background:rgba(190,196,214,.55)"></div><div style="left:227px;top:0;width:1px;height:264.9px;background:rgba(190,196,214,.55)"></div><div style="left:268px;top:0;width:1px;height:264.9px;background:rgba(190,196,214,.55)"></div></div><div style="left:272px;top:313px;width:322px;height:284px;background:#d6dbe9;border:1px solid #b9c0d0;overflow:hidden"></div><div style="left:272px;top:313px;width:321px;height:18.1px;background:#ffffff;border-bottom:1px solid #d6d6e0"></div><div class="t c" style="left:190.5px;top:312.9px;width:200px;">Mid</div><div class="t c" style="left:228px;top:312.9px;width:200px;">Delta</div><div class="t c" style="left:266px;top:312.9px;width:200px;">Theta</div><div class="t c" style="left:304px;top:312.9px;width:200px;">Vega</div><div class="t c" style="left:342px;top:312.9px;width:200px;">Orig...</div><div class="t c" style="left:380px;top:312.9px;width:200px;">IVChg</div><div class="t c" style="left:418px;top:312.9px;width:200px;">Model</div><div class="t c" style="left:457.5px;top:312.9px;width:200px;">Pos</div><div style="left:309px;top:314px;width:1px;height:16.1px;background:#d6d6e0"></div><div style="left:347px;top:314px;width:1px;height:16.1px;background:#d6d6e0"></div><div style="left:385px;top:314px;width:1px;height:16.1px;background:#d6d6e0"></div><div style="left:423px;top:314px;width:1px;height:16.1px;background:#d6d6e0"></div><div style="left:461px;top:314px;width:1px;height:16.1px;background:#d6d6e0"></div><div style="left:499px;top:314px;width:1px;height:16.1px;background:#d6d6e0"></div><div style="left:537px;top:314px;width:1px;height:16.1px;background:#d6d6e0"></div><div style="left:578px;top:314px;width:1px;height:16.1px;background:#d6d6e0"></div><div style="left:272px;top:331.1px;width:307px;height:264.9px;overflow:hidden"><div style="left:0;top:0.0px;width:306px;height:15.97px;background:#a9c2e3"></div><div style="left:0;top:14.87px;width:306px;height:1px;background:#c9d3e6"></div><div class="t r n" style="left:-165px;top:0.20px;width:200px;color:#1f9a2a">66.15</div><div class="t r n" style="left:-127px;top:0.20px;width:200px;color:#111">-53.70</div><div class="t r n" style="left:-89px;top:0.20px;width:200px;color:#111">-1.11</div><div class="t r n" style="left:-51px;top:0.20px;width:200px;color:#111">556.76</div><div style="left:0;top:15.87px;width:306px;height:15.97px;background:#a9c2e3"></div><div style="left:0;top:30.74px;width:306px;height:1px;background:#c9d3e6"></div><div class="t r n" style="left:-165px;top:16.07px;width:200px;color:#1f9a2a">55.45</div><div class="t r n" style="left:-127px;top:16.07px;width:200px;color:#111">-46.91</div><div class="t r n" style="left:-89px;top:16.07px;width:200px;color:#111">-1.22</div><div class="t r n" style="left:-51px;top:16.07px;width:200px;color:#111">557.50</div><div style="left:0;top:31.74px;width:306px;height:15.97px;background:#d2d2d2"></div><div style="left:0;top:46.61px;width:306px;height:1px;background:#dcdce4"></div><div class="t r n" style="left:-165px;top:31.94px;width:200px;color:#1f9a2a">46.60</div><div class="t r n" style="left:-127px;top:31.94px;width:200px;color:#111">-40.74</div><div class="t r n" style="left:-89px;top:31.94px;width:200px;color:#111">-1.29</div><div class="t r n" style="left:-51px;top:31.94px;width:200px;color:#111">544.04</div><div style="left:0;top:47.61px;width:306px;height:15.97px;background:#a9c2e3"></div><div style="left:0;top:62.48px;width:306px;height:1px;background:#c9d3e6"></div><div class="t r n" style="left:-165px;top:47.81px;width:200px;color:#1f9a2a">39.25</div><div class="t r n" style="left:-127px;top:47.81px;width:200px;color:#111">-35.18</div><div class="t r n" style="left:-89px;top:47.81px;width:200px;color:#111">-1.32</div><div class="t r n" style="left:-51px;top:47.81px;width:200px;color:#111">520.13</div><div style="left:0;top:63.48px;width:306px;height:15.97px;background:#a9c2e3"></div><div style="left:0;top:78.35px;width:306px;height:1px;background:#c9d3e6"></div><div class="t r n" style="left:-165px;top:63.68px;width:200px;color:#1f9a2a">33.15</div><div class="t r n" style="left:-127px;top:63.68px;width:200px;color:#111">-30.27</div><div class="t r n" style="left:-89px;top:63.68px;width:200px;color:#111">-1.33</div><div class="t r n" style="left:-51px;top:63.68px;width:200px;color:#111">489.30</div><div style="left:0;top:79.35px;width:306px;height:15.97px;background:#fffdf0"></div><div style="left:0;top:94.22px;width:306px;height:1px;background:#dcdce4"></div><div class="t r n" style="left:-165px;top:79.55px;width:200px;color:#1f9a2a">28.15</div><div class="t r n" style="left:-127px;top:79.55px;width:200px;color:#111">-26.06</div><div class="t r n" style="left:-89px;top:79.55px;width:200px;color:#111">-1.30</div><div class="t r n" style="left:-51px;top:79.55px;width:200px;color:#111">455.16</div><div style="left:0;top:95.22px;width:306px;height:15.97px;background:#a9c2e3"></div><div style="left:0;top:110.09px;width:306px;height:1px;background:#c9d3e6"></div><div class="t r n" style="left:-165px;top:95.42px;width:200px;color:#1f9a2a">23.95</div><div class="t r n" style="left:-127px;top:95.42px;width:200px;color:#111">-22.40</div><div class="t r n" style="left:-89px;top:95.42px;width:200px;color:#111">-1.27</div><div class="t r n" style="left:-51px;top:95.42px;width:200px;color:#111">419.32</div><div style="left:0;top:111.09px;width:306px;height:15.97px;background:#a9c2e3"></div><div style="left:0;top:125.96px;width:306px;height:1px;background:#c9d3e6"></div><div class="t r n" style="left:-165px;top:111.29px;width:200px;color:#1f9a2a">20.45</div><div class="t r n" style="left:-127px;top:111.29px;width:200px;color:#111">-19.26</div><div class="t r n" style="left:-89px;top:111.29px;width:200px;color:#111">-1.22</div><div class="t r n" style="left:-51px;top:111.29px;width:200px;color:#111">383.52</div><div style="left:0;top:126.96px;width:306px;height:15.97px;background:#c5e6ec"></div><div style="left:0;top:141.83px;width:306px;height:1px;background:#d4dde0"></div><div class="t r n" style="left:-165px;top:127.16px;width:200px;color:#1f9a2a">17.55</div><div class="t r n" style="left:-127px;top:127.16px;width:200px;color:#111">-16.60</div><div class="t r n" style="left:-89px;top:127.16px;width:200px;color:#111">-1.16</div><div class="t r n" style="left:-51px;top:127.16px;width:200px;color:#111">349.23</div><div style="left:0;top:142.83px;width:306px;height:15.97px;background:#c5e6ec"></div><div style="left:0;top:157.70px;width:306px;height:1px;background:#d4dde0"></div><div class="t r n" style="left:-165px;top:143.03px;width:200px;color:#1f9a2a">15.15</div><div class="t r n" style="left:-127px;top:143.03px;width:200px;color:#111">-14.35</div><div class="t r n" style="left:-89px;top:143.03px;width:200px;color:#111">-1.10</div><div class="t r n" style="left:-51px;top:143.03px;width:200px;color:#111">317.18</div><div style="left:0;top:158.7px;width:306px;height:15.97px;background:#c5e6ec"></div><div style="left:0;top:173.57px;width:306px;height:1px;background:#d4dde0"></div><div class="t r n" style="left:-165px;top:158.90px;width:200px;color:#e8202c">13.10</div><div class="t r n" style="left:-127px;top:158.90px;width:200px;color:#111">-12.40</div><div class="t r n" style="left:-89px;top:158.90px;width:200px;color:#111">-1.04</div><div class="t r n" style="left:-51px;top:158.90px;width:200px;color:#111">286.95</div><div style="left:0;top:174.57px;width:306px;height:15.97px;background:#c5e6ec"></div><div style="left:0;top:189.44px;width:306px;height:1px;background:#d4dde0"></div><div class="t r n" style="left:-165px;top:174.77px;width:200px;color:#e8202c">11.40</div><div class="t r n" style="left:-127px;top:174.77px;width:200px;color:#111">-10.77</div><div class="t r n" style="left:-89px;top:174.77px;width:200px;color:#111">-0.97</div><div class="t r n" style="left:-51px;top:174.77px;width:200px;color:#111">259.56</div><div style="left:0;top:190.44px;width:306px;height:15.97px;background:#c5e6ec"></div><div style="left:0;top:205.31px;width:306px;height:1px;background:#d4dde0"></div><div class="t r n" style="left:-165px;top:190.64px;width:200px;color:#e8202c">10.00</div><div class="t r n" style="left:-127px;top:190.64px;width:200px;color:#111">-9.40</div><div class="t r n" style="left:-89px;top:190.64px;width:200px;color:#111">-0.92</div><div class="t r n" style="left:-51px;top:190.64px;width:200px;color:#111">235.03</div><div style="left:0;top:206.31px;width:306px;height:15.97px;background:#c5e6ec"></div><div style="left:0;top:221.18px;width:306px;height:1px;background:#d4dde0"></div><div class="t r n" style="left:-165px;top:206.51px;width:200px;color:#e8202c">8.85</div><div class="t r n" style="left:-127px;top:206.51px;width:200px;color:#111">-8.25</div><div class="t r n" style="left:-89px;top:206.51px;width:200px;color:#111">-0.86</div><div class="t r n" style="left:-51px;top:206.51px;width:200px;color:#111">213.35</div><div style="left:0;top:222.18px;width:306px;height:15.97px;background:#c5e6ec"></div><div style="left:0;top:237.05px;width:306px;height:1px;background:#d4dde0"></div><div class="t r n" style="left:-165px;top:222.38px;width:200px;color:#1f9a2a">7.90</div><div class="t r n" style="left:-127px;top:222.38px;width:200px;color:#111">-7.29</div><div class="t r n" style="left:-89px;top:222.38px;width:200px;color:#111">-0.82</div><div class="t r n" style="left:-51px;top:222.38px;width:200px;color:#111">194.24</div><div style="left:0;top:238.05px;width:306px;height:15.97px;background:#ffffff"></div><div style="left:0;top:252.92px;width:306px;height:1px;background:#dcdce4"></div><div class="t r n" style="left:-165px;top:238.25px;width:200px;color:#e8202c">7.00</div><div class="t r n" style="left:-127px;top:238.25px;width:200px;color:#111">-6.42</div><div class="t r n" style="left:-89px;top:238.25px;width:200px;color:#111">-0.77</div><div class="t r n" style="left:-51px;top:238.25px;width:200px;color:#111">175.97</div><div style="left:0;top:253.92px;width:306px;height:15.97px;background:#ffffff"></div><div style="left:0;top:268.79px;width:306px;height:1px;background:#dcdce4"></div><div class="t r n" style="left:-165px;top:254.12px;width:200px;color:#e8202c">6.35</div><div class="t r n" style="left:-127px;top:254.12px;width:200px;color:#111">-5.74</div><div class="t r n" style="left:-89px;top:254.12px;width:200px;color:#111">-0.73</div><div class="t r n" style="left:-51px;top:254.12px;width:200px;color:#111">161.26</div><div style="left:37px;top:0;width:1px;height:264.9px;background:rgba(190,196,214,.55)"></div><div style="left:75px;top:0;width:1px;height:264.9px;background:rgba(190,196,214,.55)"></div><div style="left:113px;top:0;width:1px;height:264.9px;background:rgba(190,196,214,.55)"></div><div style="left:151px;top:0;width:1px;height:264.9px;background:rgba(190,196,214,.55)"></div><div style="left:189px;top:0;width:1px;height:264.9px;background:rgba(190,196,214,.55)"></div><div style="left:227px;top:0;width:1px;height:264.9px;background:rgba(190,196,214,.55)"></div><div style="left:265px;top:0;width:1px;height:264.9px;background:rgba(190,196,214,.55)"></div><div style="left:306px;top:0;width:1px;height:264.9px;background:rgba(190,196,214,.55)"></div></div><div style="left:579px;top:331.1px;width:14px;height:264.9px;background:#d3d9e8"></div><svg style="left:581.2px;top:334.3px" width="9" height="6" viewBox="0 0 9 6"><path d="M1 5L4.500 1.500L8 5z" fill="#5f6c86"/></svg><svg style="left:581.2px;top:586.3px" width="9" height="6" viewBox="0 0 9 6"><path d="M1 1L4.500 4.500L8 1z" fill="#5f6c86"/></svg><div style="left:581.4px;top:420px;width:9px;height:17px;background:#9aa2b2"></div><div style="left:-10px;top:609.5px;width:105.5px;height:16px;background:#fff;border:1px solid #c6cddc"></div><div class="t r" style="left:-186px;top:609.5px;width:200px;color:#111">Combined</div><svg style="left:84px;top:615px" width="8" height="6" viewBox="0 0 8 6"><path d="M1.5 1.5h5L4 4.5z" fill="#555b68"/></svg><div style="left:103.5px;top:609.5px;width:68px;height:16px;background:#fff;border:1px solid #c6cddc"></div><div class="t" style="left:107px;top:609.5px;color:#111">Auto</div><svg style="left:160px;top:615px" width="8" height="6" viewBox="0 0 8 6"><path d="M1.5 1.5h5L4 4.5z" fill="#555b68"/></svg><div style="left:474px;top:612px;width:9.4px;height:9.2px;background:#fff;border:1px solid #b4bac8"></div><div class="t" style="left:487px;top:609.5px;letter-spacing:-.25px">Ignore Today's Trades</div><div style="left:-4px;top:629.2px;width:598px;height:50px;background:#fff;border:1px solid #b9c0d0"></div><div class="t c" style="left:-77px;top:629.3px;width:200px;">Cost</div><div class="t c" style="left:-23px;top:629.3px;width:200px;">Curr Cost</div><div class="t c" style="left:31px;top:629.3px;width:200px;">Commis...</div><div class="t c" style="left:85px;top:629.3px;width:200px;">PnL</div><div class="t c" style="left:138.75px;top:629.3px;width:200px;">PnL%</div><div class="t c" style="left:192.25px;top:629.3px;width:200px;">Delta</div><div class="t c" style="left:246px;top:629.3px;width:200px;">Gamma</div><div class="t c" style="left:300px;top:629.3px;width:200px;">Theta</div><div class="t c" style="left:354px;top:629.3px;width:200px;">Vega</div><div class="t c" style="left:408px;top:629.3px;width:200px;">T/D</div><div class="t c" style="left:464px;top:629.3px;width:200px;">Plot</div><div style="left:-4px;top:646px;width:597px;height:1px;background:#d6d6e0"></div><div style="left:-4px;top:662px;width:597px;height:1px;background:#d6d6e0"></div><div style="left:50px;top:631px;width:1px;height:44px;background:#d6d6e0"></div><div style="left:104px;top:631px;width:1px;height:44px;background:#d6d6e0"></div><div style="left:158px;top:631px;width:1px;height:44px;background:#d6d6e0"></div><div style="left:212px;top:631px;width:1px;height:44px;background:#d6d6e0"></div><div style="left:265.5px;top:631px;width:1px;height:44px;background:#d6d6e0"></div><div style="left:319px;top:631px;width:1px;height:44px;background:#d6d6e0"></div><div style="left:373px;top:631px;width:1px;height:44px;background:#d6d6e0"></div><div style="left:427px;top:631px;width:1px;height:44px;background:#d6d6e0"></div><div style="left:481px;top:631px;width:1px;height:44px;background:#d6d6e0"></div><div style="left:535px;top:631px;width:1px;height:44px;background:#d6d6e0"></div><div class="t n r" style="left:-153px;top:647.5px;width:200px;color:#111">-9,577.60</div><div class="t n r" style="left:-99px;top:647.5px;width:200px;color:#111">11,365.00</div><div class="t n r" style="left:-45px;top:647.5px;width:200px;color:#111">12.60</div><div class="t n r" style="left:9px;top:647.5px;width:200px;color:#1f9a2a">1,787.40</div><div class="t n r" style="left:62.5px;top:647.5px;width:200px;color:#1f9a2a">21.99%</div><div class="t n r" style="left:116px;top:647.5px;width:200px;color:#111">-7.20</div><div class="t n r" style="left:170px;top:647.5px;width:200px;color:#111">-0.46</div><div class="t n r" style="left:224px;top:647.5px;width:200px;color:#111">201.23</div><div class="t n r" style="left:278px;top:647.5px;width:200px;color:#111">16.28</div><div class="t n r" style="left:332px;top:647.5px;width:200px;color:#111">27.9</div><svg style="left:559.0px;top:650.5px" width="10" height="10" viewBox="0 0 10 10"><rect x=".5" y=".5" width="9" height="9" fill="#fff" stroke="#aab0be"/><path d="M2.2 5l2 2.200L7.800 2.600" fill="none" stroke="#555b68" stroke-width="1.1"/></svg><div class="t n r" style="left:-153px;top:663.5px;width:200px;color:#111">-8,349.00</div><div class="t n r" style="left:-99px;top:663.5px;width:200px;color:#111">10,135.00</div><div class="t n r" style="left:-45px;top:663.5px;width:200px;color:#111">14.00</div><div class="t n r" style="left:9px;top:663.5px;width:200px;color:#1f9a2a">1,786.00</div><div class="t n r" style="left:62.5px;top:663.5px;width:200px;color:#1f9a2a">9.74%</div><div class="t n r" style="left:116px;top:663.5px;width:200px;color:#111">4.13</div><div class="t n r" style="left:170px;top:663.5px;width:200px;color:#111">-0.52</div><div class="t n r" style="left:224px;top:663.5px;width:200px;color:#111">215.85</div><div class="t n r" style="left:278px;top:663.5px;width:200px;color:#111">-86.08</div><div class="t n r" style="left:332px;top:663.5px;width:200px;color:#111">52.3</div><svg style="left:559.0px;top:666.5px" width="10" height="10" viewBox="0 0 10 10"><rect x=".5" y=".5" width="9" height="9" fill="#fff" stroke="#aab0be"/><path d="M2.2 5l2 2.200L7.800 2.600" fill="none" stroke="#555b68" stroke-width="1.1"/></svg><div style="left:596px;top:138px;width:8px;height:537px;background:#d6dbe9"></div><svg style="left:597px;top:403px" width="4" height="13" viewBox="0 0 4 13" fill="#9ea7bc"><rect x="0" y="0" width="1" height="1"/><rect x="3" y="0" width="1" height="1"/><rect x="0" y="3" width="1" height="1"/><rect x="3" y="3" width="1" height="1"/><rect x="0" y="6" width="1" height="1"/><rect x="3" y="6" width="1" height="1"/><rect x="0" y="9" width="1" height="1"/><rect x="3" y="9" width="1" height="1"/><rect x="0" y="12" width="1" height="1"/><rect x="3" y="12" width="1" height="1"/><rect x="1.5" y="1.5" width="1" height="1"/><rect x="1.5" y="4.5" width="1" height="1"/><rect x="1.5" y="7.5" width="1" height="1"/><rect x="1.5" y="10.5" width="1" height="1"/></svg>
<!-- ===== right panel ===== -->
<div style="left:604px;top:138px;width:476px;height:537px;background:#d6dbe9;border-left:1px solid #b4bccc"></div><div style="left:605px;top:139px;width:65px;height:23px;background:#d9deeb;border:1px solid #b4bccc;border-bottom:0"></div><div class="t c" style="left:537px;top:141.5px;width:200px;letter-spacing:-.55px">Risk Chart</div><div style="left:669px;top:139px;width:68.5px;height:22.6px;background:#cfd5e5;border:1px solid #b4bccc"></div><div class="t c" style="left:602.75px;top:141.5px;width:200px;letter-spacing:-.55px">Price Chart</div><div style="left:736.5px;top:139px;width:107.5px;height:22.6px;background:#cfd5e5;border:1px solid #b4bccc"></div><div class="t c" style="left:689.75px;top:141.5px;width:200px;letter-spacing:-.55px">Movement Analysis</div><div style="left:843px;top:139px;width:55.5px;height:22.6px;background:#cfd5e5;border:1px solid #b4bccc"></div><div class="t c" style="left:770.25px;top:141.5px;width:200px;letter-spacing:-.55px">Volatility</div><div style="left:897.5px;top:139px;width:135.5px;height:22.6px;background:#cfd5e5;border:1px solid #b4bccc"></div><div class="t c" style="left:864.75px;top:141.5px;width:200px;letter-spacing:-.55px">Statistics &amp; Fundamentals</div><div style="left:1032px;top:160.6px;width:48px;height:1px;background:#b4bccc"></div><div class="t" style="left:610px;top:163.7px;">Vol Adjust</div><div style="left:658.5px;top:164px;width:45px;height:17px;background:#fff;border:1px solid #c2c9d8"></div><div class="t r" style="left:487px;top:163.7px;width:200px;color:#111">0</div><svg style="left:693px;top:166px" width="8" height="13" viewBox="0 0 8 13"><path d="M1.5 4.500L4 2L6.500 4.500zM1.500 8.500L4 11L6.500 8.500z" fill="#444a58"/></svg><div class="t" style="left:981.5px;top:163.7px;">Projection</div><div style="left:1029.5px;top:164px;width:60px;height:17px;background:#fff;border:1px solid #c2c9d8"></div><div class="t" style="left:1033px;top:163.7px;color:#111">19/02/2025</div><div style="left:605px;top:182.5px;width:475px;height:475.5px;background:#fff"></div><svg style="left:0;top:0" width="1080" height="675" viewBox="0 0 1080 675" font-family="Liberation Sans, sans-serif" font-size="9">
<defs><clipPath id="plot"><rect x="652.7" y="198" width="428" height="279.500"/></clipPath></defs>
<path d="M649.500 198.5H1080" stroke="#e4e4e4" stroke-width="1"/>
<path d="M649.500 214.9H1080" stroke="#e4e4e4" stroke-width="1"/>
<path d="M649.500 231.2H1080" stroke="#e4e4e4" stroke-width="1"/>
<path d="M649.500 247.6H1080" stroke="#e4e4e4" stroke-width="1"/>
<path d="M649.500 264.0H1080" stroke="#e4e4e4" stroke-width="1"/>
<path d="M649.500 280.4H1080" stroke="#e4e4e4" stroke-width="1"/>
<path d="M649.500 296.8H1080" stroke="#e4e4e4" stroke-width="1"/>
<path d="M649.500 313.1H1080" stroke="#e4e4e4" stroke-width="1"/>
<path d="M649.500 329.5H1080" stroke="#e4e4e4" stroke-width="1"/>
<path d="M649.500 345.9H1080" stroke="#e4e4e4" stroke-width="1"/>
<path d="M649.500 362.2H1080" stroke="#e4e4e4" stroke-width="1"/>
<path d="M649.500 378.6H1080" stroke="#e4e4e4" stroke-width="1"/>
<path d="M649.500 395.0H1080" stroke="#e4e4e4" stroke-width="1"/>
<path d="M649.500 411.4H1080" stroke="#e4e4e4" stroke-width="1"/>
<path d="M649.500 427.8H1080" stroke="#e4e4e4" stroke-width="1"/>
<path d="M649.500 444.1H1080" stroke="#e4e4e4" stroke-width="1"/>
<path d="M649.500 460.5H1080" stroke="#e4e4e4" stroke-width="1"/>
<path d="M649.500 476.9H1080" stroke="#e4e4e4" stroke-width="1"/>
<path d="M658.5 195.5V480.5" stroke="#e4e4e4" stroke-width="1"/>
<path d="M703.5 195.5V480.5" stroke="#e4e4e4" stroke-width="1"/>
<path d="M748.5 195.5V480.5" stroke="#e4e4e4" stroke-width="1"/>
<path d="M793.5 195.5V480.5" stroke="#e4e4e4" stroke-width="1"/>
<path d="M839.5 195.5V480.5" stroke="#e4e4e4" stroke-width="1"/>
<path d="M884.5 195.5V480.5" stroke="#e4e4e4" stroke-width="1"/>
<path d="M929.5 195.5V480.5" stroke="#e4e4e4" stroke-width="1"/>
<path d="M974.5 195.5V480.5" stroke="#e4e4e4" stroke-width="1"/>
<path d="M1020.5 195.5V480.5" stroke="#e4e4e4" stroke-width="1"/>
<path d="M1065.5 195.5V480.5" stroke="#e4e4e4" stroke-width="1"/>
<path d="M652 198.5V477" stroke="#e0e0e0" stroke-width="1"/>
<rect x="849.5" y="198.5" width="122.500" height="278.5" fill="#92cbdc"/>
<rect x="880" y="198.5" width="62" height="278.5" fill="#4f81c0"/>
<rect x="880" y="198.5" width="4" height="278.5" fill="#5887c6"/>
<path d="M849.500 198.5H972" stroke="#e4e6e8" stroke-opacity=".62" stroke-width="1"/>
<path d="M849.500 214.9H972" stroke="#e4e6e8" stroke-opacity=".62" stroke-width="1"/>
<path d="M849.500 231.2H972" stroke="#e4e6e8" stroke-opacity=".62" stroke-width="1"/>
<path d="M849.500 247.6H972" stroke="#e4e6e8" stroke-opacity=".62" stroke-width="1"/>
<path d="M849.500 264.0H972" stroke="#e4e6e8" stroke-opacity=".62" stroke-width="1"/>
<path d="M849.500 280.4H972" stroke="#e4e6e8" stroke-opacity=".62" stroke-width="1"/>
<path d="M849.500 296.8H972" stroke="#e4e6e8" stroke-opacity=".62" stroke-width="1"/>
<path d="M849.500 313.1H972" stroke="#e4e6e8" stroke-opacity=".62" stroke-width="1"/>
<path d="M849.500 329.5H972" stroke="#e4e6e8" stroke-opacity=".62" stroke-width="1"/>
<path d="M849.500 345.9H972" stroke="#e4e6e8" stroke-opacity=".62" stroke-width="1"/>
<path d="M849.500 362.2H972" stroke="#e4e6e8" stroke-opacity=".62" stroke-width="1"/>
<path d="M849.500 378.6H972" stroke="#e4e6e8" stroke-opacity=".62" stroke-width="1"/>
<path d="M849.500 395.0H972" stroke="#e4e6e8" stroke-opacity=".62" stroke-width="1"/>
<path d="M849.500 411.4H972" stroke="#e4e6e8" stroke-opacity=".62" stroke-width="1"/>
<path d="M849.500 427.8H972" stroke="#e4e6e8" stroke-opacity=".62" stroke-width="1"/>
<path d="M849.500 444.1H972" stroke="#e4e6e8" stroke-opacity=".62" stroke-width="1"/>
<path d="M849.500 460.5H972" stroke="#e4e6e8" stroke-opacity=".62" stroke-width="1"/>
<path d="M849.500 476.9H972" stroke="#e4e6e8" stroke-opacity=".62" stroke-width="1"/>
<path d="M884.5 198.5V477" stroke="#ffffff" stroke-opacity=".62" stroke-width="1"/>
<path d="M929.5 198.5V477" stroke="#ffffff" stroke-opacity=".62" stroke-width="1"/>
<path d="M652 329.500H1080" stroke="#5c5c5c" stroke-width="1.250"/>
<path d="M849.5 198.5V477" stroke="#a428ac" stroke-opacity=".78" stroke-width="1.150" stroke-dasharray="3.500 3.600"/>
<path d="M867.5 198.5V477" stroke="#a428ac" stroke-opacity=".78" stroke-width="1.150" stroke-dasharray="3.500 3.600"/>
<path d="M890.5 198.5V477" stroke="#a428ac" stroke-opacity=".78" stroke-width="1.150" stroke-dasharray="3.500 3.600"/>
<path d="M1034.5 198.5V477" stroke="#a428ac" stroke-opacity=".78" stroke-width="1.150" stroke-dasharray="3.500 3.600"/>
<g clip-path="url(#plot)" fill="none" stroke-linejoin="round">
<path d="M652.7 389.0 C661.1 385.8 687.4 375.9 703.3 370.0 C719.2 364.1 731.7 359.2 748.3 353.3 C764.9 347.4 789.4 339.2 803.0 334.5 C816.6 329.8 822.2 327.8 830.0 325.1 C837.8 322.4 840.4 321.5 849.7 318.2 C859.0 314.9 875.6 308.7 885.6 305.5 C895.6 302.3 901.1 300.8 910.0 299.0 C918.9 297.2 931.3 295.3 938.8 295.0 C946.3 294.7 949.4 295.8 955.0 297.0 C960.6 298.2 965.7 299.6 972.4 302.0 C979.1 304.4 987.1 307.8 995.0 311.5 C1002.9 315.2 1010.6 319.2 1019.8 324.0 C1029.0 328.8 1040.0 335.6 1050.0 340.5 C1060.0 345.4 1075.0 351.4 1080.0 353.6" stroke="#f26464" stroke-width=".9"/>
<path d="M652.7 394.1 C661.1 390.8 687.4 380.5 703.3 374.0 C719.2 367.5 731.7 361.7 748.3 355.3 C764.9 348.9 789.4 340.5 803.0 335.5 C816.6 330.5 822.2 328.2 830.0 325.4 C837.8 322.5 840.4 321.7 849.7 318.4 C859.0 315.2 875.6 308.9 885.6 305.8 C895.6 302.6 901.1 301.0 910.0 299.2 C918.9 297.5 931.3 295.6 938.8 295.2 C946.3 294.9 949.4 296.1 955.0 297.2 C960.6 298.4 965.7 299.8 972.4 302.2 C979.1 304.7 987.1 308.1 995.0 311.8 C1002.9 315.4 1010.6 319.0 1019.8 324.2 C1029.0 329.5 1040.0 337.6 1050.0 343.5 C1060.0 349.4 1075.0 356.8 1080.0 359.4" stroke="#f26464" stroke-width=".9"/>
<path d="M652.7 428.4 C661.1 424.4 687.4 412.1 703.3 404.5 C719.2 396.9 729.4 392.6 748.3 382.8 C767.1 373.1 802.8 353.0 816.4 346.0 C830.0 339.0 824.5 343.5 830.0 340.6 C835.5 337.7 843.5 332.5 849.7 328.6 C855.9 324.8 861.0 320.8 867.0 317.5 C873.0 314.2 879.3 311.6 885.6 308.9 C891.9 306.1 898.8 302.8 905.0 301.0 C911.2 299.2 915.9 298.1 922.6 298.0 C929.3 297.9 936.7 298.9 945.0 300.5 C953.3 302.1 964.1 305.1 972.4 307.8 C980.7 310.6 987.1 313.3 995.0 317.0 C1002.9 320.7 1010.6 325.1 1019.8 329.8 C1029.0 334.6 1040.0 340.4 1050.0 345.5 C1060.0 350.6 1075.0 358.0 1080.0 360.5" stroke="#f26464" stroke-width=".9"/>
<path d="M652.7 440.0 C661.1 436.0 687.4 423.9 703.3 416.0 C719.2 408.1 729.4 403.9 748.3 392.7 C767.1 381.5 802.8 357.6 816.4 349.0 C830.0 340.4 824.5 344.2 830.0 340.9 C835.5 337.5 843.5 332.7 849.7 328.9 C855.9 325.0 861.0 321.0 867.0 317.8 C873.0 314.5 879.3 311.9 885.6 309.1 C891.9 306.4 898.8 303.1 905.0 301.2 C911.2 299.4 915.9 298.3 922.6 298.2 C929.3 298.2 936.7 299.1 945.0 300.8 C953.3 302.4 964.1 305.3 972.4 308.1 C980.7 310.8 987.1 313.6 995.0 317.2 C1002.9 320.9 1010.6 324.9 1019.8 330.1 C1029.0 335.2 1040.0 342.3 1050.0 348.0 C1060.0 353.7 1075.0 361.3 1080.0 364.0" stroke="#f26464" stroke-width=".9"/>
<path d="M837.0 337.0 C839.1 336.1 844.7 333.5 849.7 331.5 C854.7 329.5 861.0 327.0 867.0 325.0 C873.0 323.0 880.2 320.8 885.6 319.4 C891.0 318.0 892.8 317.4 899.4 316.6 C906.0 315.8 921.1 315.0 925.4 314.7" stroke="#58d858" stroke-width="1"/>
<path d="M858.0 320.3 C859.5 319.8 862.4 318.4 867.0 317.5 C871.6 316.6 880.3 315.6 885.6 315.2 C890.9 314.8 892.4 314.9 899.0 314.8 C905.6 314.7 915.3 314.1 925.4 314.7 C935.5 315.3 951.8 317.2 959.6 318.2 C967.4 319.2 966.2 319.1 972.4 320.5 C978.6 321.9 989.6 324.8 996.7 326.3 C1003.8 327.9 1008.8 328.2 1015.0 329.8 C1021.2 331.4 1026.9 333.1 1033.7 335.6 C1040.5 338.1 1048.3 341.4 1056.0 345.0 C1063.7 348.6 1076.0 355.0 1080.0 357.0" stroke="#40d840" stroke-width="1.2"/>
<path d="M925.4 314.7 C931.1 315.5 948.5 317.2 959.6 319.5 C970.7 321.8 982.9 325.8 992.0 328.6 C1001.1 331.4 1010.3 334.9 1014.0 336.2" stroke="#a8c4f4" stroke-width="1.1"/>
<path d="M801.8 335.6 C804.8 334.6 812.0 331.5 820.0 329.4 C828.0 327.3 842.7 324.5 849.7 322.8 C856.7 321.1 860.0 319.6 862.0 319.0" stroke="#a4bcf2" stroke-width="1.200"/>
<path d="M652.7 406.2 C661.1 401.8 687.4 389.0 703.3 379.5 C719.2 370.0 733.2 361.0 748.3 349.1 C763.4 337.2 786.3 315.1 793.9 308.3 L816.4 304.9 L883.6 347.2 L974.5 219.6 L1065.7 397.6 L1080.0 399.2" stroke="#4646cc" stroke-width="1.380"/>
<path d="M652.7 458.0 C661.1 453.4 687.4 440.4 703.3 430.5 C719.2 420.6 733.2 410.3 748.3 398.3 C763.4 386.3 782.5 368.7 793.9 358.4 C805.3 348.1 812.7 340.1 816.5 336.4 L849.6 329.4 L861.9 325.7 L883.6 337.2 L974.5 209.6 L1065.7 388.3 L1080.0 389.8" stroke="#168a16" stroke-width="1.520"/>
</g>
<rect x="895.500" y="311.500" width="27" height="6.200" fill="#dca88c" fill-opacity=".9"/>
<path d="M895.500 314.900L925 314.700" stroke="#40d840" stroke-width="1.200"/>
<circle cx="925.5" cy="314.5" r="3" fill="#18e8e8" stroke="#0c3048" stroke-width="1"/>
<text transform="translate(860.3 234) rotate(-90)" fill="#5a9ad6" font-size="9">6062.70</text>
<text transform="translate(890.5 234) rotate(-90)" fill="#9cc6ee" font-size="9">6096.14</text>
<text transform="translate(940.2 234) rotate(-90)" fill="#9cc6ee" font-size="9">6163.02</text>
<text transform="translate(970.6 234) rotate(-90)" fill="#5a9ad6" font-size="9">6195.46</text>
<text transform="translate(847.7 474.300) rotate(-90)" fill="#8b1a8b" font-size="9">6061.31</text>
<text transform="translate(865.7 474.300) rotate(-90)" fill="#8b1a8b" font-size="9">6081.22</text>
<text transform="translate(888.7 474.300) rotate(-90)" fill="#8b1a8b" font-size="9">6106.56</text>
<text transform="translate(1032.7 474.300) rotate(-90)" fill="#8b1a8b" font-size="9">6265.84</text>
<text x="646.500" y="202.4" text-anchor="end" fill="#222" letter-spacing="-.2">197%</text>
<text x="646.500" y="218.8" text-anchor="end" fill="#222" letter-spacing="-.2">172%</text>
<text x="646.500" y="235.2" text-anchor="end" fill="#222" letter-spacing="-.2">148%</text>
<text x="646.500" y="251.5" text-anchor="end" fill="#222" letter-spacing="-.2">123%</text>
<text x="646.500" y="267.9" text-anchor="end" fill="#222" letter-spacing="-.2">98%</text>
<text x="646.500" y="284.3" text-anchor="end" fill="#222" letter-spacing="-.2">74%</text>
<text x="646.500" y="300.6" text-anchor="end" fill="#222" letter-spacing="-.2">49%</text>
<text x="646.500" y="333.4" text-anchor="end" fill="#222" letter-spacing="-.2">0%</text>
<text x="646.500" y="349.8" text-anchor="end" fill="#222" letter-spacing="-.2">-25%</text>
<text x="646.500" y="366.1" text-anchor="end" fill="#222" letter-spacing="-.2">-49%</text>
<text x="646.500" y="382.5" text-anchor="end" fill="#222" letter-spacing="-.2">-74%</text>
<text x="646.500" y="398.9" text-anchor="end" fill="#222" letter-spacing="-.2">-98%</text>
<text x="646.500" y="415.3" text-anchor="end" fill="#222" letter-spacing="-.2">-123%</text>
<text x="646.500" y="431.6" text-anchor="end" fill="#222" letter-spacing="-.2">-148%</text>
<text x="646.500" y="448.0" text-anchor="end" fill="#222" letter-spacing="-.2">-172%</text>
<text x="646.500" y="464.4" text-anchor="end" fill="#222" letter-spacing="-.2">-197%</text>
<text x="646.500" y="480.8" text-anchor="end" fill="#222" letter-spacing="-.2">-221%</text>
<rect x="610" y="308" width="39" height="11" fill="#008000"/>
<text x="646.500" y="317.100" text-anchor="end" fill="#fff" letter-spacing="-.2">22%</text>
<text x="658.4" y="489.600" text-anchor="middle" fill="#222">5850</text>
<text x="703.6" y="489.600" text-anchor="middle" fill="#222">5900</text>
<text x="748.9" y="489.600" text-anchor="middle" fill="#222">5950</text>
<text x="794.1" y="489.600" text-anchor="middle" fill="#222">6000</text>
<text x="839.3" y="489.600" text-anchor="middle" fill="#222">6050</text>
<text x="884.5" y="489.600" text-anchor="middle" fill="#222">6100</text>
<text x="975.0" y="489.600" text-anchor="middle" fill="#222">6200</text>
<text x="1020.2" y="489.600" text-anchor="middle" fill="#222">6250</text>
<text x="1065.4" y="489.600" text-anchor="middle" fill="#222">6300</text>
<text x="658.4" y="194.400" text-anchor="middle" fill="#222">-4.6%</text>
<text x="703.6" y="194.400" text-anchor="middle" fill="#222">-3.7%</text>
<text x="748.9" y="194.400" text-anchor="middle" fill="#222">-2.9%</text>
<text x="794.1" y="194.400" text-anchor="middle" fill="#222">-2.1%</text>
<text x="839.3" y="194.400" text-anchor="middle" fill="#222">-1.3%</text>
<text x="884.5" y="194.400" text-anchor="middle" fill="#222">-0.5%</text>
<text x="975.0" y="194.400" text-anchor="middle" fill="#222">1.1%</text>
<text x="1020.2" y="194.400" text-anchor="middle" fill="#222">2.0%</text>
<text x="1065.4" y="194.400" text-anchor="middle" fill="#222">2.8%</text>
<rect x="913.500" y="183.500" width="24.500" height="10" fill="#e9f0fa" stroke="#5d6c82" stroke-width="1"/>
<text x="925.500" y="193.300" text-anchor="middle" fill="#222">0.3%</text>
<rect x="656.800" y="203.500" width="140.800" height="117" rx="4" fill="#e4ecf8" fill-opacity=".88" stroke="#98a6bc"/>
<rect x="663.500" y="210.4" width="2.400" height="10.500" fill="#aae8a2"/>
<text x="666.500" y="219.4" fill="#555">1,902.40 Realized PnL</text>
<rect x="663.500" y="222.1" width="2.400" height="10.500" fill="#44c044"/>
<text x="666.500" y="231.1" fill="#555">+1</text>
<text x="679.5" y="231.1" fill="#5a5af0">07mar. 6000 Put Δ</text>
<text x="789.500" y="231.1" text-anchor="end" fill="#5a5af0">-18.57</text>
<rect x="663.500" y="233.8" width="2.400" height="10.500" fill="#44c044"/>
<text x="666.500" y="242.8" fill="#555">-1</text>
<text x="676.5" y="242.8" fill="#f05c5c">07mar. 6075 Put Δ</text>
<text x="789.500" y="242.8" text-anchor="end" fill="#f05c5c">-29.88</text>
<rect x="663.500" y="245.6" width="2.400" height="10.500" fill="#6f9be8"/>
<text x="666.500" y="254.6" fill="#555">+2</text>
<text x="679.5" y="254.6" fill="#5a5af0">07mar. 6100 Call Δ</text>
<text x="789.500" y="254.6" text-anchor="end" fill="#5a5af0">65.47</text>
<rect x="663.500" y="257.3" width="2.400" height="10.500" fill="#6f9be8"/>
<text x="666.500" y="266.3" fill="#555">+2</text>
<text x="679.5" y="266.3" fill="#5a5af0">28mar. 6000 Put Δ</text>
<text x="789.500" y="266.3" text-anchor="end" fill="#5a5af0">-29.01</text>
<rect x="663.500" y="269.0" width="2.400" height="10.500" fill="#6f9be8"/>
<text x="666.500" y="278.0" fill="#555">+2</text>
<text x="679.5" y="278.0" fill="#5a5af0">07mar. 6300 Call Δ</text>
<text x="789.500" y="278.0" text-anchor="end" fill="#5a5af0">10.89</text>
<rect x="663.500" y="280.7" width="2.400" height="10.500" fill="#6f9be8"/>
<text x="666.500" y="289.7" fill="#555">-1</text>
<text x="676.5" y="289.7" fill="#f05c5c">07mar. 6000 Put Δ</text>
<text x="789.500" y="289.7" text-anchor="end" fill="#f05c5c">-18.57</text>
<rect x="663.500" y="292.4" width="2.400" height="10.500" fill="#6f9be8"/>
<text x="666.500" y="301.4" fill="#555">-4</text>
<text x="676.5" y="301.4" fill="#f05c5c">07mar. 6200 Call Δ</text>
<text x="789.500" y="301.4" text-anchor="end" fill="#f05c5c">37.24</text>
<rect x="663.500" y="304.2" width="2.400" height="10.500" fill="#6f9be8"/>
<text x="666.500" y="313.2" fill="#555">-1</text>
<text x="676.5" y="313.2" fill="#f05c5c">07mar. 6025 Put Δ</text>
<text x="789.500" y="313.2" text-anchor="end" fill="#f05c5c">-21.76</text>
<rect x="657" y="425.800" width="92.500" height="46.700" rx="4" fill="#d9e3f5" fill-opacity=".62" stroke="#9aa8be"/>
<text x="664" y="441.200" fill="#4a9a4a" font-size="8.650">07/03/2025 (0)</text>
<text x="664" y="453.200" fill="#f07070" font-size="8.650">27/02/2025 (8) T+8</text>
<text x="664" y="464.900" fill="#5cd45c" font-size="8.650">19/02/2025 (16) T+0</text>
<text x="738" y="469" fill="#8b1a8b" font-size="9">24.4%</text>
<text x="847.5" y="469" fill="#8b1a8b" font-size="9">4.8%</text>
<text x="866" y="469" fill="#8b1a8b" font-size="9">6.7%</text>
<text x="949.5" y="469" fill="#8b1a8b" font-size="9">42.7%</text>
<text x="1075.5" y="469" fill="#8b1a8b" font-size="9">21.2%</text>
<rect x="608.500" y="495.500" width="480" height="159.500" rx="4" fill="#e9f0f9" stroke="#8e9bb0"/>
<text x="630.700" y="522.9" text-anchor="middle" fill="#555" font-size="9">PnL</text>
<rect x="653.3" y="519.4" width="27.7" height="9.0" fill="#f27a7e" stroke="#5a3a3a" stroke-width=".5"/>
<text x="658.4" y="508.200" text-anchor="middle" fill="#ee6a6a">-146%</text>
<text x="658.4" y="518" text-anchor="middle" fill="#ee6a6a">-11839</text>
<rect x="681.0" y="519.4" width="45.2" height="7.0" fill="#f27a7e" stroke="#5a3a3a" stroke-width=".5"/>
<text x="703.6" y="508.200" text-anchor="middle" fill="#ee6a6a">-113%</text>
<text x="703.6" y="518" text-anchor="middle" fill="#ee6a6a">-9220</text>
<rect x="726.2" y="519.4" width="45.2" height="4.8" fill="#f27a7e" stroke="#5a3a3a" stroke-width=".5"/>
<text x="748.9" y="508.200" text-anchor="middle" fill="#ee6a6a">-78%</text>
<text x="748.9" y="518" text-anchor="middle" fill="#ee6a6a">-6353</text>
<rect x="771.5" y="519.4" width="45.2" height="2.6" fill="#f27a7e" stroke="#5a3a3a" stroke-width=".5"/>
<text x="794.1" y="508.200" text-anchor="middle" fill="#ee6a6a">-42%</text>
<text x="794.1" y="518" text-anchor="middle" fill="#ee6a6a">-3434</text>
<rect x="816.7" y="519.4" width="45.2" height="0.6" fill="#f27a7e" stroke="#5a3a3a" stroke-width=".5"/>
<text x="839.3" y="508.200" text-anchor="middle" fill="#ee6a6a">-10%</text>
<text x="839.3" y="518" text-anchor="middle" fill="#ee6a6a">-809</text>
<rect x="861.9" y="518.6" width="45.2" height="0.8" fill="#5676f6" stroke="#3a3f5a" stroke-width=".5"/>
<text x="884.5" y="526.900" text-anchor="middle" fill="#7474ec">1069</text>
<text x="884.5" y="535.800" text-anchor="middle" fill="#7474ec">13%</text>
<rect x="907.1" y="518.0" width="45.2" height="1.4" fill="#5676f6" stroke="#3a3f5a" stroke-width=".5"/>
<text x="929.8" y="526.900" text-anchor="middle" fill="#7474ec">1800</text>
<text x="929.8" y="535.800" text-anchor="middle" fill="#7474ec">22%</text>
<rect x="952.4" y="518.4" width="45.2" height="1.0" fill="#5676f6" stroke="#3a3f5a" stroke-width=".5"/>
<text x="975.0" y="526.900" text-anchor="middle" fill="#7474ec">1257</text>
<text x="975.0" y="535.800" text-anchor="middle" fill="#7474ec">15%</text>
<text x="1020.2" y="508.200" text-anchor="middle" fill="#ee6a6a">-4%</text>
<text x="1020.2" y="518" text-anchor="middle" fill="#ee6a6a">-300</text>
<rect x="1042.8" y="519.4" width="37.7" height="1.8" fill="#f27a7e" stroke="#5a3a3a" stroke-width=".5"/>
<text x="1065.4" y="508.200" text-anchor="middle" fill="#ee6a6a">-29%</text>
<text x="1065.4" y="518" text-anchor="middle" fill="#ee6a6a">-2337</text>
<path d="M653.300 519.4H1080" stroke="#4a4f5a" stroke-width=".8"/>
<text x="630.700" y="559.1" text-anchor="middle" fill="#555" font-size="9">Delta</text>
<rect x="653.3" y="547.6" width="27.7" height="8.0" fill="#5676f6" stroke="#3a3f5a" stroke-width=".5"/>
<text x="658.4" y="564.4" text-anchor="middle" fill="#7474ec">49.22</text>
<rect x="681.0" y="546.6" width="45.2" height="9.0" fill="#5676f6" stroke="#3a3f5a" stroke-width=".5"/>
<text x="703.6" y="564.4" text-anchor="middle" fill="#7474ec">55.29</text>
<rect x="726.2" y="546.0" width="45.2" height="9.6" fill="#5676f6" stroke="#3a3f5a" stroke-width=".5"/>
<text x="748.9" y="564.4" text-anchor="middle" fill="#7474ec">58.75</text>
<rect x="771.5" y="546.4" width="45.2" height="9.2" fill="#5676f6" stroke="#3a3f5a" stroke-width=".5"/>
<text x="794.1" y="564.4" text-anchor="middle" fill="#7474ec">56.84</text>
<rect x="816.7" y="548.0" width="45.2" height="7.6" fill="#5676f6" stroke="#3a3f5a" stroke-width=".5"/>
<text x="839.3" y="564.4" text-anchor="middle" fill="#7474ec">46.60</text>
<rect x="861.9" y="551.2" width="45.2" height="4.4" fill="#5676f6" stroke="#3a3f5a" stroke-width=".5"/>
<text x="884.5" y="564.4" text-anchor="middle" fill="#7474ec">27.09</text>
<text x="929.8" y="564.4" text-anchor="middle" fill="#7474ec">1.06</text>
<rect x="952.4" y="555.6" width="45.2" height="3.7" fill="#f27a7e" stroke="#5a3a3a" stroke-width=".5"/>
<text x="975.0" y="554.8" text-anchor="middle" fill="#ee6a6a">-22.47</text>
<rect x="997.6" y="555.6" width="45.2" height="6.2" fill="#f27a7e" stroke="#5a3a3a" stroke-width=".5"/>
<text x="1020.2" y="554.8" text-anchor="middle" fill="#ee6a6a">-37.94</text>
<rect x="1042.8" y="555.6" width="37.7" height="6.8" fill="#f27a7e" stroke="#5a3a3a" stroke-width=".5"/>
<text x="1065.4" y="554.8" text-anchor="middle" fill="#ee6a6a">-41.60</text>
<path d="M653.300 555.6H1080" stroke="#4a4f5a" stroke-width=".8"/>
<text x="630.700" y="586.6" text-anchor="middle" fill="#555" font-size="9">Gamma</text>
<rect x="653.3" y="580.6" width="27.7" height="2.5" fill="#5676f6" stroke="#3a3f5a" stroke-width=".5"/>
<text x="658.4" y="591.9" text-anchor="middle" fill="#7474ec">0.14</text>
<rect x="681.0" y="581.3" width="45.2" height="1.8" fill="#5676f6" stroke="#3a3f5a" stroke-width=".5"/>
<text x="703.6" y="591.9" text-anchor="middle" fill="#7474ec">0.10</text>
<rect x="726.2" y="582.6" width="45.2" height="0.5" fill="#5676f6" stroke="#3a3f5a" stroke-width=".5"/>
<text x="748.9" y="591.9" text-anchor="middle" fill="#7474ec">0.03</text>
<rect x="771.5" y="583.1" width="45.2" height="1.9" fill="#f27a7e" stroke="#5a3a3a" stroke-width=".5"/>
<text x="794.1" y="582.3" text-anchor="middle" fill="#ee6a6a">-0.11</text>
<rect x="816.7" y="583.1" width="45.2" height="5.3" fill="#f27a7e" stroke="#5a3a3a" stroke-width=".5"/>
<text x="839.3" y="582.3" text-anchor="middle" fill="#ee6a6a">-0.30</text>
<rect x="861.9" y="583.1" width="45.2" height="8.3" fill="#f27a7e" stroke="#5a3a3a" stroke-width=".5"/>
<text x="884.5" y="582.3" text-anchor="middle" fill="#ee6a6a">-0.47</text>
<rect x="907.1" y="583.1" width="45.2" height="9.2" fill="#f27a7e" stroke="#5a3a3a" stroke-width=".5"/>
<text x="929.8" y="582.3" text-anchor="middle" fill="#ee6a6a">-0.52</text>
<rect x="952.4" y="583.1" width="45.2" height="7.4" fill="#f27a7e" stroke="#5a3a3a" stroke-width=".5"/>
<text x="975.0" y="582.3" text-anchor="middle" fill="#ee6a6a">-0.42</text>
<rect x="997.6" y="583.1" width="45.2" height="3.4" fill="#f27a7e" stroke="#5a3a3a" stroke-width=".5"/>
<text x="1020.2" y="582.3" text-anchor="middle" fill="#ee6a6a">-0.19</text>
<rect x="1042.8" y="582.4" width="37.7" height="0.7" fill="#5676f6" stroke="#3a3f5a" stroke-width=".5"/>
<text x="1065.4" y="591.9" text-anchor="middle" fill="#7474ec">0.04</text>
<path d="M653.300 583.1H1080" stroke="#4a4f5a" stroke-width=".8"/>
<text x="630.700" y="614.8" text-anchor="middle" fill="#555" font-size="9">Theta</text>
<rect x="653.3" y="611.3" width="27.7" height="6.5" fill="#f27a7e" stroke="#5a3a3a" stroke-width=".5"/>
<text x="658.4" y="610.5" text-anchor="middle" fill="#ee6a6a">-164.41</text>
<rect x="681.0" y="611.3" width="45.2" height="6.0" fill="#f27a7e" stroke="#5a3a3a" stroke-width=".5"/>
<text x="703.6" y="610.5" text-anchor="middle" fill="#ee6a6a">-150.88</text>
<rect x="726.2" y="611.3" width="45.2" height="4.6" fill="#f27a7e" stroke="#5a3a3a" stroke-width=".5"/>
<text x="748.9" y="610.5" text-anchor="middle" fill="#ee6a6a">-116.38</text>
<rect x="771.5" y="611.3" width="45.2" height="1.9" fill="#f27a7e" stroke="#5a3a3a" stroke-width=".5"/>
<text x="794.1" y="610.5" text-anchor="middle" fill="#ee6a6a">-49.16</text>
<rect x="816.7" y="609.3" width="45.2" height="2.0" fill="#5676f6" stroke="#3a3f5a" stroke-width=".5"/>
<text x="839.3" y="620.1" text-anchor="middle" fill="#7474ec">50.22</text>
<rect x="861.9" y="605.2" width="45.2" height="6.1" fill="#5676f6" stroke="#3a3f5a" stroke-width=".5"/>
<text x="884.5" y="620.1" text-anchor="middle" fill="#7474ec">155.03</text>
<rect x="907.1" y="602.7" width="45.2" height="8.6" fill="#5676f6" stroke="#3a3f5a" stroke-width=".5"/>
<text x="929.8" y="620.1" text-anchor="middle" fill="#7474ec">216.93</text>
<rect x="952.4" y="603.1" width="45.2" height="8.2" fill="#5676f6" stroke="#3a3f5a" stroke-width=".5"/>
<text x="975.0" y="620.1" text-anchor="middle" fill="#7474ec">207.28</text>
<rect x="997.6" y="606.3" width="45.2" height="5.0" fill="#5676f6" stroke="#3a3f5a" stroke-width=".5"/>
<text x="1020.2" y="620.1" text-anchor="middle" fill="#7474ec">127.02</text>
<rect x="1042.8" y="610.4" width="37.7" height="0.9" fill="#5676f6" stroke="#3a3f5a" stroke-width=".5"/>
<text x="1065.4" y="620.1" text-anchor="middle" fill="#7474ec">23.30</text>
<path d="M653.300 611.3H1080" stroke="#4a4f5a" stroke-width=".8"/>
<text x="630.700" y="642.1" text-anchor="middle" fill="#555" font-size="9">Vega</text>
<rect x="653.3" y="629.7" width="27.7" height="8.9" fill="#5676f6" stroke="#3a3f5a" stroke-width=".5"/>
<text x="658.4" y="647.4" text-anchor="middle" fill="#7474ec">1053.99</text>
<rect x="681.0" y="629.6" width="45.2" height="9.0" fill="#5676f6" stroke="#3a3f5a" stroke-width=".5"/>
<text x="703.6" y="647.4" text-anchor="middle" fill="#7474ec">1062.67</text>
<rect x="726.2" y="630.3" width="45.2" height="8.3" fill="#5676f6" stroke="#3a3f5a" stroke-width=".5"/>
<text x="748.9" y="647.4" text-anchor="middle" fill="#7474ec">979.18</text>
<rect x="771.5" y="632.1" width="45.2" height="6.5" fill="#5676f6" stroke="#3a3f5a" stroke-width=".5"/>
<text x="794.1" y="647.4" text-anchor="middle" fill="#7474ec">767.83</text>
<rect x="816.7" y="634.9" width="45.2" height="3.7" fill="#5676f6" stroke="#3a3f5a" stroke-width=".5"/>
<text x="839.3" y="647.4" text-anchor="middle" fill="#7474ec">442.24</text>
<rect x="861.9" y="637.7" width="45.2" height="0.9" fill="#5676f6" stroke="#3a3f5a" stroke-width=".5"/>
<text x="884.5" y="647.4" text-anchor="middle" fill="#7474ec">103.12</text>
<rect x="907.1" y="638.6" width="45.2" height="0.8" fill="#f27a7e" stroke="#5a3a3a" stroke-width=".5"/>
<text x="929.8" y="637.8" text-anchor="middle" fill="#ee6a6a">-95.86</text>
<rect x="952.4" y="638.6" width="45.2" height="0.4" fill="#f27a7e" stroke="#5a3a3a" stroke-width=".5"/>
<text x="975.0" y="637.8" text-anchor="middle" fill="#ee6a6a">-52.35</text>
<rect x="997.6" y="637.0" width="45.2" height="1.6" fill="#5676f6" stroke="#3a3f5a" stroke-width=".5"/>
<text x="1020.2" y="647.4" text-anchor="middle" fill="#7474ec">187.04</text>
<rect x="1042.8" y="634.7" width="37.7" height="3.9" fill="#5676f6" stroke="#3a3f5a" stroke-width=".5"/>
<text x="1065.4" y="647.4" text-anchor="middle" fill="#7474ec">462.30</text>
<path d="M653.300 638.6H1080" stroke="#4a4f5a" stroke-width=".8"/>
<rect x="904.500" y="481.500" width="42" height="172" rx="4" fill="#e6edf7" fill-opacity=".9" stroke="#7f8da2"/>
<text x="925.500" y="491" text-anchor="middle" fill="#111">6145.30</text>
<text x="925.500" y="518.6" text-anchor="middle" fill="#2828e0" stroke="#2828e0" stroke-width=".12">1,786</text>
<text x="925.500" y="531.6" text-anchor="middle" fill="#2828e0" stroke="#2828e0" stroke-width=".12">22.0%</text>
<text x="925.500" y="559.2" text-anchor="middle" fill="#2828e0" stroke="#2828e0" stroke-width=".12">4.13</text>
<text x="925.500" y="587.3" text-anchor="middle" fill="#e82020" stroke="#e82020" stroke-width=".12">-0.52</text>
<text x="925.500" y="614.9" text-anchor="middle" fill="#2828e0" stroke="#2828e0" stroke-width=".12">215.85</text>
<text x="925.500" y="642.5" text-anchor="middle" fill="#e82020" stroke="#e82020" stroke-width=".12">-86.08</text>
</svg><div style="left:604px;top:658px;width:476px;height:17px;background:#293755"></div><div class="t" style="left:1037px;top:659px;color:#eef2fa">340%</div><div class="t" style="left:1069px;top:658px;color:#eef2fa">−</div>
</body></html>
